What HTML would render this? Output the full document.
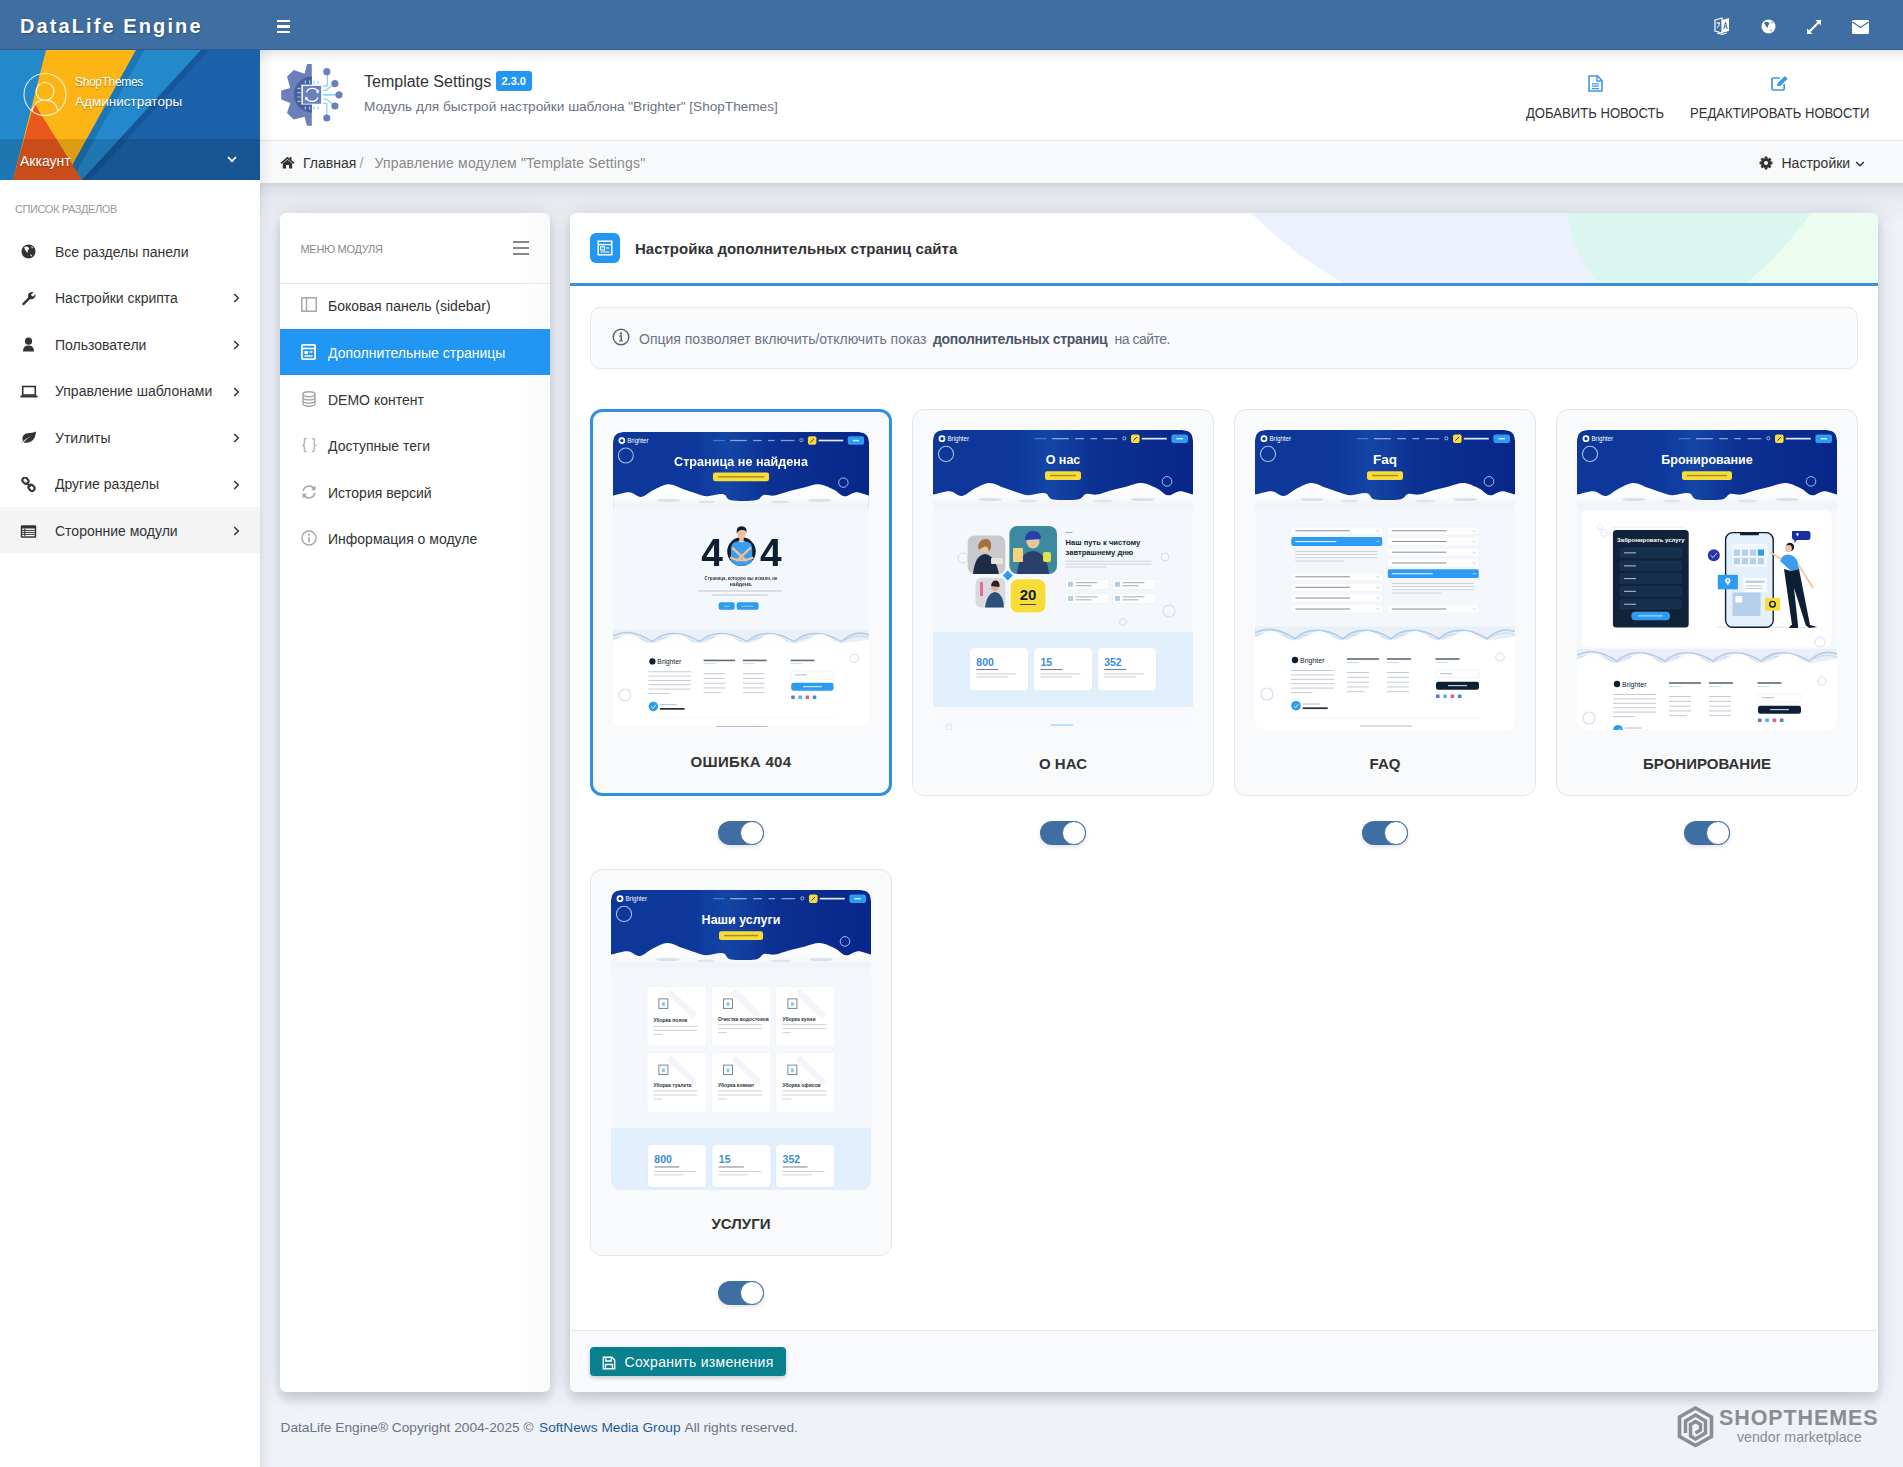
<!DOCTYPE html>
<html><head><meta charset="utf-8">
<style>
*{box-sizing:border-box;margin:0;padding:0}
html,body{width:1903px;height:1467px;overflow:hidden}
body{font-family:"Liberation Sans",sans-serif;background:#eff2f7;color:#333;position:relative}
.abs{position:absolute}
svg{display:block}
#topbar{left:0;top:0;width:1903px;height:50px;background:#3f6fa2}
#logo{left:20px;top:14px;color:#fff;font-size:20px;font-weight:bold;letter-spacing:2.1px;line-height:24px;text-shadow:1px 1px 2px rgba(0,0,0,.3)}
#sidebar{left:0;top:50px;width:260px;height:1417px;background:#fff}
#profile{left:0;top:50px;width:260px;height:130px;overflow:hidden}
#content-head{left:260px;top:50px;width:1643px;height:90px;background:#fff}
#crumbs{left:260px;top:140px;width:1643px;height:43px;background:#f8f9fb;border-top:1px solid #e4e7ec;}
.card{background:#fff;border-radius:6px;box-shadow:0 0 24px rgba(20,30,50,.12),0 7px 10px rgba(20,30,50,.14)}
#menu{left:280px;top:213px;width:270px;height:1179px}
#main{left:570px;top:213px;width:1308px;height:1179px;overflow:hidden}
.t{position:absolute;white-space:nowrap;line-height:1}
.sb-item{position:absolute;left:0;width:260px;height:46px}
.sb-item .lbl{position:absolute;left:55px;top:16px;font-size:14px;color:#333;white-space:nowrap;line-height:1}
.sb-item .ic{position:absolute;left:20px;top:15px}
.sb-item .chev{position:absolute;left:233px;top:19px}
.mm-item{position:absolute;left:0;width:270px;height:46px}
.mm-item .lbl{position:absolute;left:48px;top:16px;font-size:14px;color:#333;white-space:nowrap;line-height:1}
.mm-item .ic{position:absolute;left:21px;top:15px}
</style></head>
<body>
<div id="topbar" class="abs"></div>
<div id="logo" class="abs">DataLife Engine</div>
<!-- hamburger -->
<div class="abs" style="left:277px;top:20px;width:13px;height:13px">
  <div class="abs" style="left:0;top:0;width:13px;height:2.4px;background:#fff"></div>
  <div class="abs" style="left:0;top:5.3px;width:13px;height:2.4px;background:#fff"></div>
  <div class="abs" style="left:0;top:10.6px;width:13px;height:2.4px;background:#fff"></div>
</div>
<!-- top icons -->
<svg class="abs" style="left:1714px;top:17px" width="16" height="18" viewBox="0 0 16 18">
  <path d="M1 3 L8 1 L8 16 L1 14 Z" fill="none" stroke="#fff" stroke-width="1.2"/>
  <path d="M8 3 L15 1 L15 14 L8 16 Z" fill="#fff"/>
  <path d="M9.8 12 L11.5 5 L13.2 12 M10.4 9.8 H12.6" fill="none" stroke="#3f6fa2" stroke-width="1"/>
  <path d="M2.5 6 H6 M4.3 5 V6 M3 11 Q5.5 9 5.5 6" fill="none" stroke="#fff" stroke-width="1"/>
  <path d="M3 16 Q8 19 13 16" fill="none" stroke="#fff" stroke-width="1"/>
</svg>
<svg class="abs" style="left:1761px;top:19px" width="15" height="15" viewBox="0 0 15 15">
  <circle cx="7.5" cy="7.5" r="7" fill="#fff"/>
  <path d="M3 3.5 Q5 2 7.5 3.2 L8.5 5 L7 6.5 L6.8 9 L5.5 8 L4 5.5 Z M9 10 L11 11.5 L10 12.5 Z M10 2 L12 3.5 L11 4.5 Z" fill="#3f6fa2"/>
</svg>
<svg class="abs" style="left:1806px;top:19px" width="16" height="16" viewBox="0 0 16 16">
  <path d="M9.5 1 H15 V6.5 L13 4.5 L4.5 13 L6.5 15 H1 V9.5 L3 11.5 L11.5 3 Z" fill="#fff"/>
</svg>
<svg class="abs" style="left:1852px;top:20px" width="17" height="14" viewBox="0 0 17 14">
  <rect x="0" y="0" width="17" height="14" rx="1.5" fill="#fff"/>
  <path d="M0.5 2 L8.5 7.5 L16.5 2" fill="none" stroke="#3f6fa2" stroke-width="1.1"/>
</svg>

<div id="sidebar" class="abs" style="box-shadow:1px 0 3px rgba(0,0,0,.04)"></div>
<div id="profile" class="abs">
  <svg width="260" height="130" viewBox="0 50 260 130">
    <rect x="0" y="50" width="260" height="130" fill="#1b62ab"/>
    <polygon points="0,50 201,50 82,180 0,180" fill="#2389cb"/>
    <polygon points="201,50 209,50 90,180 82,180" fill="#134a86" opacity=".45"/>
    <polygon points="46,50 136,50 64,180 13,180" fill="#fcb514"/>
    <polygon points="136,50 144,50 72,180 64,180" fill="#14508f" opacity=".35"/>
    <polygon points="34,103 82,180 13,180" fill="#e9581d"/>
    <rect x="0" y="139" width="260" height="41" fill="#000" opacity=".13"/>
    <circle cx="45" cy="94.5" r="21" fill="none" stroke="#fff" stroke-opacity=".85" stroke-width="1.1"/>
    <circle cx="45" cy="91.5" r="9" fill="none" stroke="#fff" stroke-opacity=".85" stroke-width="1.1"/>
    <path d="M32 111 Q34 100 45 100 Q56 100 58 111" fill="none" stroke="#fff" stroke-opacity=".85" stroke-width="1.1"/>
  </svg>
</div>
<div class="t" style="left:75px;top:76px;font-size:12px;color:#fff;letter-spacing:-0.35px;text-shadow:0 1px 1px rgba(0,0,0,.3)">ShopThemes</div>
<div class="t" style="left:75px;top:95px;font-size:13.5px;color:#fff;text-shadow:0 1px 1px rgba(0,0,0,.3)">Администраторы</div>
<div class="t" style="left:20px;top:154px;font-size:14px;color:#fff;text-shadow:0 1px 1px rgba(0,0,0,.3)">Аккаунт</div>
<svg class="abs" style="left:227px;top:156px" width="10" height="7" viewBox="0 0 10 7"><path d="M1 1 L5 5.2 L9 1" fill="none" stroke="#fff" stroke-width="1.8"/></svg>

<div class="t" style="left:15px;top:204px;font-size:11px;color:#999;letter-spacing:-0.4px">СПИСОК РАЗДЕЛОВ</div>
<div class="t" style="left:55px;top:244.5px;font-size:14px;color:#333">Все разделы панели</div>
<div class="abs" style="left:21px;top:244.0px"><svg width="15" height="15" viewBox="0 0 15 15"><circle cx="7.5" cy="7.5" r="7" fill="#333"/><path d="M3.2 3.2 Q5 2 7.2 3 L8.3 4.8 L6.8 6.2 L6.7 8.8 L5.4 7.8 L3.8 5.3 Z M9.2 10 L11.2 11.6 L10 12.6 Z M10 2.2 L12 3.6 L11 4.6 Z" fill="#fff"/></svg></div>
<div class="t" style="left:55px;top:291.1px;font-size:14px;color:#333">Настройки скрипта</div>
<div class="abs" style="left:21px;top:290.6px"><svg width="15" height="15" viewBox="0 0 15 15"><path d="M1.5 12.3 L7.2 6.6 Q6.3 3.5 8.6 1.8 Q10.6 0.6 12.6 1.2 L10.2 3.4 L10.6 5 L12.2 5.4 L14.4 3 Q15 5.2 13.4 7 Q11.6 8.8 8.9 8.2 L3.2 13.9 Q2.3 14.6 1.5 13.8 Q0.8 13 1.5 12.3 Z" fill="#333"/></svg></div>
<div class="abs" style="left:233px;top:293.4px"><svg width="7" height="10" viewBox="0 0 7 10"><path d="M1.2 1 L5.3 5 L1.2 9" fill="none" stroke="#333" stroke-width="1.5"/></svg></div>
<div class="t" style="left:55px;top:337.6px;font-size:14px;color:#333">Пользователи</div>
<div class="abs" style="left:21px;top:337.2px"><svg width="15" height="15" viewBox="0 0 15 15"><circle cx="7.5" cy="4.2" r="3.6" fill="#333"/><path d="M2 14.5 Q2 8.6 7.5 8.6 Q13 8.6 13 14.5 Z" fill="#333"/></svg></div>
<div class="abs" style="left:233px;top:340.0px"><svg width="7" height="10" viewBox="0 0 7 10"><path d="M1.2 1 L5.3 5 L1.2 9" fill="none" stroke="#333" stroke-width="1.5"/></svg></div>
<div class="t" style="left:55px;top:384.2px;font-size:14px;color:#333">Управление шаблонами</div>
<div class="abs" style="left:20px;top:383.8px"><svg width="18" height="15" viewBox="0 0 18 15"><rect x="2.7" y="2.5" width="12.6" height="8.5" fill="none" stroke="#333" stroke-width="1.6"/><rect x="0.5" y="11.6" width="17" height="1.8" rx=".5" fill="#333"/></svg></div>
<div class="abs" style="left:233px;top:386.6px"><svg width="7" height="10" viewBox="0 0 7 10"><path d="M1.2 1 L5.3 5 L1.2 9" fill="none" stroke="#333" stroke-width="1.5"/></svg></div>
<div class="t" style="left:55px;top:430.9px;font-size:14px;color:#333">Утилиты</div>
<div class="abs" style="left:20px;top:430.4px"><svg width="17" height="15" viewBox="0 0 17 15"><path d="M1 13.5 Q6 8 12 5.5 Q6 9 3.5 12.5 Q7 13.5 11 11.5 Q15.5 9 16 1.5 Q12.5 3.2 8 3.3 Q3.5 3.5 2.5 7.5 Q2.2 9.5 3 11 Q1.8 12.3 1 13.5 Z" fill="#333"/></svg></div>
<div class="abs" style="left:233px;top:433.2px"><svg width="7" height="10" viewBox="0 0 7 10"><path d="M1.2 1 L5.3 5 L1.2 9" fill="none" stroke="#333" stroke-width="1.5"/></svg></div>
<div class="t" style="left:55px;top:477.4px;font-size:14px;color:#333">Другие разделы</div>
<div class="abs" style="left:21px;top:477.0px"><svg width="15" height="15" viewBox="0 0 15 15"><g fill="none" stroke="#333" stroke-width="2.1"><rect x="1.2" y="1.2" width="6.5" height="5" rx="2.5" transform="rotate(45 4.5 3.7)"/><rect x="7.3" y="8.3" width="6.5" height="5" rx="2.5" transform="rotate(45 10.5 10.8)"/></g><path d="M5.3 5.6 L9.5 9.8" stroke="#333" stroke-width="1.8"/></svg></div>
<div class="abs" style="left:233px;top:479.8px"><svg width="7" height="10" viewBox="0 0 7 10"><path d="M1.2 1 L5.3 5 L1.2 9" fill="none" stroke="#333" stroke-width="1.5"/></svg></div>
<div class="abs" style="left:0;top:506.9px;width:260px;height:46px;background:#f4f4f5"></div>
<div class="t" style="left:55px;top:524.1px;font-size:14px;color:#333">Сторонние модули</div>
<div class="abs" style="left:20px;top:523.6px"><svg width="17" height="15" viewBox="0 0 17 15"><rect x="0.8" y="1.3" width="15.4" height="12.4" rx="1.2" fill="#333"/><rect x="2.3" y="4.5" width="12.4" height="7.8" fill="#fff"/><path d="M2.3 6.4 H14.7 M2.3 8.4 H14.7 M2.3 10.4 H14.7" stroke="#333" stroke-width="1"/><path d="M4.8 4.5 V12.3" stroke="#333" stroke-width="1"/></svg></div>
<div class="abs" style="left:233px;top:526.4px"><svg width="7" height="10" viewBox="0 0 7 10"><path d="M1.2 1 L5.3 5 L1.2 9" fill="none" stroke="#333" stroke-width="1.5"/></svg></div>
<div id="content-head" class="abs"></div>
<svg class="abs" style="left:276px;top:60px" width="72" height="70" viewBox="0 0 72 70">
  <polygon points="31,4 35.8,4 35.8,65.8 31,65.8 28.6,56.8 17.7,59.6 11,53 14.3,43 5.2,39.6 5.2,30.5 14.3,28 11,16.7 17.7,10 28.6,13.8" fill="#6b80bb"/>
  <path d="M35.8 16.5 A18 18 0 0 0 35.8 52.5 Z" fill="#4b5f9c"/>
  <g stroke="#8fd3f4" stroke-width="1.2">
    <path d="M21.5 28.4 H24.5 M21.5 32.7 H24.5 M21.5 37 H24.5 M21.5 41.3 H24.5"/>
    <path d="M29.3 20.5 V23.5 M33.6 20.5 V23.5 M37.9 20.5 V23.5 M42.2 20.5 V23.5"/>
    <path d="M29.3 46.5 V49.5 M33.6 46.5 V49.5 M37.9 46.5 V49.5 M42.2 46.5 V49.5"/>
  </g>
  <g stroke="#8fd3f4" stroke-width="1.3" fill="none">
    <path d="M47 26 H51.3 V12"/>
    <path d="M47 30.3 H50 L58.7 23.6"/>
    <path d="M47 34.8 H63" stroke-width="1.8"/>
    <path d="M47 39.1 H50.6 L58.7 46"/>
    <path d="M47 43.4 H50.8 V58"/>
  </g>
  <g fill="#6b80bb">
    <circle cx="50.8" cy="11.7" r="3.6"/><circle cx="58.9" cy="23.6" r="3.6"/><circle cx="63" cy="34.8" r="3.6"/><circle cx="58.9" cy="46" r="3.6"/><circle cx="50.8" cy="58" r="3.6"/>
  </g>
  <rect x="25.3" y="24.6" width="20.5" height="20" fill="#e6eefa"/>
  <rect x="27" y="26" width="18" height="17.7" fill="#6b80bb"/>
  <path d="M30.5 32.5 A6 5 0 0 1 42 31.5" fill="none" stroke="#fff" stroke-width="1.2"/>
  <path d="M43.2 29.5 L42.5 33.5 L39.5 32 Z" fill="#fff"/>
  <path d="M41.8 37.5 A6 5 0 0 1 30.5 38.5" fill="none" stroke="#fff" stroke-width="1.2"/>
  <path d="M28.8 40.5 L29.5 36.5 L32.5 38 Z" fill="#fff"/>
</svg>
<div class="t" style="left:364px;top:73.5px;font-size:16px;color:#333">Template Settings</div>
<div class="abs" style="left:496px;top:71px;width:36px;height:20px;background:#2196f3;border-radius:3px"></div>
<div class="t" style="left:501.5px;top:76.2px;font-size:11px;font-weight:bold;color:#fff;letter-spacing:0px">2.3.0</div>
<div class="t" style="left:364px;top:100.2px;font-size:13.6px;color:#6b7385">Модуль для быстрой настройки шаблона "Brighter" [ShopThemes]</div>

<svg class="abs" style="left:1588px;top:75px" width="15" height="17" viewBox="0 0 15 17">
  <path d="M1 1 H9.5 L14 5.5 V16 H1 Z" fill="none" stroke="#3d98e8" stroke-width="1.6"/>
  <path d="M9 1 V6 H14" fill="none" stroke="#3d98e8" stroke-width="1.4"/>
  <path d="M4 8.8 H11 M4 11.2 H11 M4 13.6 H11" stroke="#3d98e8" stroke-width="1.3"/>
</svg>
<svg class="abs" style="left:1771px;top:75px" width="18" height="16" viewBox="0 0 18 16">
  <path d="M9 3 H2.2 Q1 3 1 4.2 V13.8 Q1 15 2.2 15 H12 Q13.2 15 13.2 13.8 V9" fill="none" stroke="#3d98e8" stroke-width="1.7"/>
  <path d="M6 11 L6.6 8.2 L13.8 1 L16.6 3.8 L9.4 11 Z" fill="#3d98e8"/>
</svg>
<div class="t" style="left:1526px;top:106.2px;font-size:14px;color:#333;transform:scaleX(.935);transform-origin:0 0">ДОБАВИТЬ НОВОСТЬ</div>
<div class="t" style="left:1690px;top:106.2px;font-size:14px;color:#333;transform:scaleX(.935);transform-origin:0 0">РЕДАКТИРОВАТЬ НОВОСТИ</div>

<div class="abs" style="left:260px;top:183px;width:1643px;height:40px;background:linear-gradient(to bottom,rgba(20,30,50,.14) 0,rgba(20,30,50,.07) 6px,rgba(20,30,50,.035) 16px,rgba(20,30,50,0) 40px)"></div>
<div id="crumbs" class="abs"></div>
<svg class="abs" style="left:280px;top:156px" width="15" height="13" viewBox="0 0 15 13">
  <path d="M7.5 0.8 L0.5 6.8 L1.6 8 L7.5 3 L13.4 8 L14.5 6.8 L11.5 4.2 V1 H9.8 V2.8 Z" fill="#333"/>
  <path d="M2.8 7.6 L7.5 3.8 L12.2 7.6 V12.5 H9 V9 H6 V12.5 H2.8 Z" fill="#333"/>
</svg>
<div class="t" style="left:303px;top:156.2px;font-size:14px;color:#333">Главная</div>
<div class="t" style="left:359.5px;top:156.2px;font-size:14px;color:#999">/</div>
<div class="t" style="left:374.5px;top:156.2px;font-size:14px;color:#888;letter-spacing:0.17px">Управление модулем "Template Settings"</div>
<svg class="abs" style="left:1759px;top:156px" width="14" height="14" viewBox="0 0 14 14">
  <g fill="#333"><circle cx="7" cy="7" r="4.8"/>
  <rect x="5.6" y="0.6" width="2.8" height="12.8" rx=".6"/><rect x="5.6" y="0.6" width="2.8" height="12.8" rx=".6" transform="rotate(45 7 7)"/><rect x="5.6" y="0.6" width="2.8" height="12.8" rx=".6" transform="rotate(90 7 7)"/><rect x="5.6" y="0.6" width="2.8" height="12.8" rx=".6" transform="rotate(135 7 7)"/></g>
  <circle cx="7" cy="7" r="2" fill="#f8f9fb"/>
</svg>
<div class="t" style="left:1781.5px;top:156.2px;font-size:14px;color:#333">Настройки</div>
<svg class="abs" style="left:1855px;top:160px" width="10" height="8" viewBox="0 0 10 8"><path d="M1.2 2 L5 5.8 L8.8 2" fill="none" stroke="#333" stroke-width="1.5"/></svg>

<div id="menu" class="abs card"></div>
<div class="abs" id="menu-grad" style="left:520px;top:213px;width:30px;height:1179px;border-radius:0 6px 6px 0;background:linear-gradient(to right,rgba(20,30,50,0),rgba(20,30,50,.022))"></div>
<div class="t" style="left:300.5px;top:243.7px;font-size:11px;color:#888;letter-spacing:-0.3px">МЕНЮ МОДУЛЯ</div>
<div class="abs" style="left:513px;top:241px;width:16px;height:14px">
  <div class="abs" style="left:0;top:0;width:16px;height:1.6px;background:#888"></div>
  <div class="abs" style="left:0;top:6.2px;width:16px;height:1.6px;background:#888"></div>
  <div class="abs" style="left:0;top:12.4px;width:16px;height:1.6px;background:#888"></div>
</div>
<div class="abs" style="left:280px;top:283px;width:270px;height:1px;background:#e5e7eb"></div>
<div class="abs" style="left:280px;top:329px;width:270px;height:46px;background:#2196f3"></div>
<svg class="abs" style="left:301px;top:297px" width="16" height="15" viewBox="0 0 16 15"><rect x="0.8" y="0.8" width="14.4" height="13.4" fill="none" stroke="#a6a6a6" stroke-width="1.5"/><path d="M5.5 0.8 V14.2" stroke="#a6a6a6" stroke-width="1.5"/></svg>
<div class="t" style="left:328px;top:299.2px;font-size:14px;color:#333">Боковая панель (sidebar)</div>
<svg class="abs" style="left:301px;top:344px" width="15" height="16" viewBox="0 0 15 16"><rect x="0.9" y="0.9" width="13.2" height="14.2" rx="1" fill="none" stroke="#fff" stroke-width="1.8"/><path d="M0.9 4.5 H14.1" stroke="#fff" stroke-width="1.6"/><rect x="3.5" y="7" width="3.6" height="3" fill="#fff"/><path d="M8.5 8 H11.5 M3.5 12 H11.5" stroke="#fff" stroke-width="1.3"/></svg>
<div class="t" style="left:328px;top:346.2px;font-size:14px;color:#fff">Дополнительные страницы</div>
<svg class="abs" style="left:302px;top:391px" width="14" height="16" viewBox="0 0 14 16"><g fill="none" stroke="#a6a6a6" stroke-width="1.4"><ellipse cx="7" cy="3.2" rx="6" ry="2.4"/><path d="M1 3.2 V12.8 Q1 15.2 7 15.2 Q13 15.2 13 12.8 V3.2"/><path d="M1 6.5 Q1 8.9 7 8.9 Q13 8.9 13 6.5 M1 9.7 Q1 12.1 7 12.1 Q13 12.1 13 9.7"/></g></svg>
<div class="t" style="left:328px;top:392.9px;font-size:14px;color:#333">DEMO контент</div>
<div class="t" style="left:302px;top:437px;font-size:14px;color:#a8a8a8;letter-spacing:5px">{}</div>
<div class="t" style="left:328px;top:439px;font-size:14px;color:#333">Доступные теги</div>
<svg class="abs" style="left:301px;top:484px" width="16" height="16" viewBox="0 0 16 16"><g fill="none" stroke="#a6a6a6" stroke-width="1.5"><path d="M2.2 7 A6 6 0 0 1 13.2 5"/><path d="M13.8 9 A6 6 0 0 1 2.8 11"/></g><path d="M14.5 1.5 V6.2 H9.8 Z M1.5 14.5 V9.8 H6.2 Z" fill="#a6a6a6"/></svg>
<div class="t" style="left:328px;top:485.6px;font-size:14px;color:#333">История версий</div>
<svg class="abs" style="left:301px;top:530px" width="16" height="16" viewBox="0 0 16 16"><circle cx="8" cy="8" r="7" fill="none" stroke="#a6a6a6" stroke-width="1.4"/><circle cx="8" cy="4.6" r="1.1" fill="#a6a6a6"/><path d="M8 7 V12" stroke="#a6a6a6" stroke-width="1.6"/></svg>
<div class="t" style="left:328px;top:532.2px;font-size:14px;color:#333">Информация о модуле</div>
<div id="main" class="abs card"></div>
<svg class="abs" style="left:570px;top:213px" width="1308" height="71" viewBox="570 213 1308 71">
  <defs><clipPath id="hc"><path d="M570 283 V219 Q570 213 576 213 H1872 Q1878 213 1878 219 V283 Z"/></clipPath></defs>
  <g clip-path="url(#hc)">
    <circle cx="1560" cy="-100" r="440" fill="#ebf2fd"/>
    <rect x="1690" y="213" width="190" height="71" fill="#ebfcf0"/>
    <path d="M1567 212 Q1574 258 1600 284 H1745 Q1784 252 1811 212 Z" fill="#dbf5ef"/>
  </g>
</svg>
<div class="abs" style="left:590px;top:233px;width:30px;height:30px;background:#2196f3;border-radius:6px"></div>
<svg class="abs" style="left:597px;top:240px" width="16" height="16" viewBox="0 0 16 16"><rect x="1.2" y="1.2" width="13.6" height="13.6" fill="none" stroke="#fff" stroke-width="1.5"/><path d="M1.2 4.6 H14.8" stroke="#fff" stroke-width="1.3"/><rect x="3.6" y="6.8" width="3.8" height="3.2" fill="none" stroke="#fff" stroke-width="1.1"/><path d="M8.8 8 H12.4 M3.6 12 H12.4" stroke="#fff" stroke-width="1.1"/></svg>
<div class="t" style="left:635px;top:241.3px;font-size:15px;font-weight:bold;color:#333">Настройка дополнительных страниц сайта</div>
<div class="abs" style="left:570px;top:283px;width:1308px;height:3px;background:#3a8fdc"></div>

<div class="abs" style="left:590px;top:306.5px;width:1268px;height:62.5px;background:#f9fafc;border:1px solid #e6e8ec;border-radius:10px"></div>
<svg class="abs" style="left:612px;top:328px" width="18" height="18" viewBox="0 0 18 18"><circle cx="9" cy="9" r="7.8" fill="none" stroke="#5d6678" stroke-width="1.5"/><circle cx="9" cy="5.4" r="1.2" fill="#5d6678"/><path d="M7.3 8 H9.2 V12.8 M7.3 12.8 H10.8" fill="none" stroke="#5d6678" stroke-width="1.5"/></svg>
<div class="t" style="left:639px;top:331.5px;font-size:14px;color:#6b7385">Опция позволяет включить/отключить показ</div>
<div class="t" style="left:933px;top:331.5px;font-size:14px;font-weight:bold;color:#4d5668;letter-spacing:-0.3px">дополнительных страниц</div>
<div class="t" style="left:1114.5px;top:331.5px;font-size:14px;color:#6b7385;letter-spacing:-0.5px">на сайте.</div>

<div class="abs" style="left:570px;top:1330px;width:1308px;height:62px;background:#f9fafc;border-top:1px solid #e6e8ec;border-radius:0 0 6px 6px"></div>
<div class="abs" style="left:590px;top:1347px;width:196px;height:29px;background:#08808d;border-radius:4px;box-shadow:0 2px 4px rgba(0,0,0,.2)"></div>
<svg class="abs" style="left:602px;top:1356px" width="14" height="14" viewBox="0 0 14 14"><path d="M1.3 1.3 H10 L12.7 4 V12.7 H1.3 Z" fill="none" stroke="#fff" stroke-width="1.4"/><path d="M3.8 1.3 V5 H9.2 V1.3" fill="none" stroke="#fff" stroke-width="1.3"/><path d="M3.5 12.7 V8.5 H10.5 V12.7" fill="none" stroke="#fff" stroke-width="1.3"/></svg>
<div class="t" style="left:624.5px;top:1355.2px;font-size:14px;color:#fff;letter-spacing:0.28px">Сохранить изменения</div>

<div class="t" style="left:280.5px;top:1421.4px;font-size:13.7px;color:#6b7385">DataLife Engine® Copyright 2004-2025 ©</div>
<div class="t" style="left:539px;top:1421.4px;font-size:13.7px;color:#1d5c98">SoftNews Media Group</div>
<div class="t" style="left:684.5px;top:1421.4px;font-size:13.7px;color:#6b7385">All rights reserved.</div>

<svg class="abs" style="left:1677px;top:1406px" width="37" height="42" viewBox="0 0 37 42">
  <path d="M18.5 2 L34.5 11 V30.5 L18.5 39.5 L2.5 30.5 V11 Z" fill="none" stroke="#8a8d91" stroke-width="3.6"/>
  <path d="M8.5 27 V15 L18.5 9 L28.5 15 V27 L18.5 33 L13.5 30 V18.5 L18.5 15.5 L23.5 18.5 V24 L18.5 27" fill="none" stroke="#8a8d91" stroke-width="3.4"/>
</svg>
<div class="t" style="left:1719px;top:1408px;font-size:21.5px;font-weight:bold;color:#8a8d91;letter-spacing:0.9px">SHOPTHEMES</div>
<div class="t" style="left:1737px;top:1430px;font-size:14.2px;color:#8a8d91">vendor marketplace</div>
<div class="abs" style="left:260px;top:50px;width:14px;height:1417px;background:linear-gradient(to right,rgba(20,30,50,.06),rgba(20,30,50,0))"></div>
<div class="abs" style="left:260px;top:50px;width:1643px;height:14px;background:linear-gradient(to bottom,rgba(20,30,50,.12),rgba(20,30,50,.05) 5px,rgba(20,30,50,0))"></div>
<div class="abs" style="left:0;top:48.5px;width:1903px;height:1.5px;background:rgba(20,40,70,.25)"></div>
<div class="abs" style="left:590px;top:409px;width:302px;height:387px;background:#f8fafc;border:3px solid #3390e0;border-radius:12px"></div>
<div class="abs" style="left:613px;top:432px;width:260px;height:300px;transform:scale(0.9846153846153847);transform-origin:0 0"><svg width="260" height="300" viewBox="0 0 260 300"><defs><clipPath id="tca"><path d="M0 11 Q0 0 11 0 H249 Q260 0 260 11 V289 Q260 300 249 300 H11 Q0 300 0 289 Z"/></clipPath></defs><g clip-path="url(#tca)"><rect width="260" height="300" fill="#f4f7fb"/><defs><linearGradient id="hga" x1="0" y1="0" x2="1" y2="0"><stop offset="0" stop-color="#0d3798"/><stop offset=".3" stop-color="#0d379b"/><stop offset=".45" stop-color="#1445a5"/><stop offset=".62" stop-color="#0b3192"/><stop offset="1" stop-color="#08268a"/></linearGradient><linearGradient id="sna" x1="0" y1="0" x2="0" y2="1"><stop offset="0" stop-color="#ffffff"/><stop offset=".45" stop-color="#fbfcfd"/><stop offset=".75" stop-color="#f0f3f7"/><stop offset="1" stop-color="#f4f7fb"/></linearGradient></defs><path d="M0 11 Q0 0 11 0 H249 Q260 0 260 11 V78 H0 Z" fill="url(#hga)"/><circle cx="9" cy="8.7" r="3.4" fill="#fff"/><circle cx="9" cy="8.7" r="1.6" fill="#0b2f8e"/><text x="14.5" y="11.3" font-family="Liberation Sans" font-size="7.4" fill="#fff" textLength="21.5" lengthAdjust="spacingAndGlyphs">Brighter</text><rect x="101.8" y="8" width="11.600000000000009" height="1.3" fill="#4aa8f5" opacity=".6"/><rect x="119" y="8" width="16.80000000000001" height="1.3" fill="#dfe6f5" opacity=".6"/><rect x="142.3" y="8" width="8.699999999999989" height="1.3" fill="#dfe6f5" opacity=".6"/><rect x="157.5" y="8" width="6.5" height="1.3" fill="#dfe6f5" opacity=".6"/><rect x="170.5" y="8" width="13.699999999999989" height="1.3" fill="#dfe6f5" opacity=".6"/><circle cx="191.3" cy="8.3" r="1.6" fill="none" stroke="#fff" stroke-width=".6"/><rect x="198" y="4.4" width="8.6" height="8.6" rx="2" fill="#f7dc3a"/><path d="M200.5 10.5 L204 7" stroke="#0f1f33" stroke-width=".9"/><rect x="208.8" y="7.8" width="25" height="1.7" fill="#fff" opacity=".9"/><rect x="238.4" y="4.4" width="16.6" height="8.6" rx="2.2" fill="#2d9cf0"/><rect x="243.5" y="8" width="6.5" height="1.4" fill="#fff" opacity=".8"/><circle cx="13" cy="23.9" r="7.6" fill="none" stroke="#b9cdf0" stroke-width="1.1" opacity=".9"/><circle cx="234" cy="51.4" r="4.8" fill="none" stroke="#b9cdf0" stroke-width="1" opacity=".9"/><text x="130" y="34.3" text-anchor="middle" font-family="Liberation Sans" font-weight="bold" font-size="12.8" fill="#fff">Страница не найдена</text><rect x="101.5" y="41.2" width="57" height="8.7" rx="2.2" fill="#f7dc3a"/><rect x="106.5" y="44.8" width="47" height="1.5" fill="#5a5320" opacity=".55"/><path d="M0 64.6 C3.6 64.0 11.6 61.0 16.4 61.2 C21.2 61.4 24.6 66.4 28.7 66 C32.8 65.6 36.5 61.2 41 59 C45.5 56.8 51.0 53.2 56 53 C61.0 52.8 66.2 56.2 71 57.8 C75.8 59.4 80.6 61.2 84.7 62.5 C88.8 63.8 91.0 65.2 95.6 65.3 C100.1 65.4 107.9 62.5 112 63.2 C116.1 63.9 114.5 68.4 120 69.4 C125.5 70.4 139.3 70.3 144.8 69.4 C150.3 68.5 149.8 64.8 153 64 C156.2 63.2 159.9 65.2 164 64.6 C168.1 64.0 172.6 61.9 177.6 60.5 C182.6 59.1 188.8 57.6 194 56.4 C199.2 55.1 204.0 52.7 209 53 C214.0 53.3 219.7 56.4 224 58.4 C228.3 60.4 231.2 64.8 235 65.3 C238.8 65.8 242.8 61.3 247 61.2 C251.2 61.1 257.0 64.0 260 64.6 V82 H0 Z" fill="url(#sna)"/><ellipse cx="57" cy="69.5" rx="12" ry="1.6" fill="#c3c8d0" opacity=".5"/><ellipse cx="95" cy="71" rx="9" ry="1.4" fill="#c3c8d0" opacity=".4"/><ellipse cx="170" cy="71" rx="10" ry="1.4" fill="#c3c8d0" opacity=".4"/><ellipse cx="210" cy="69.5" rx="12" ry="1.6" fill="#c3c8d0" opacity=".5"/><text x="89.6" y="136" font-family="Liberation Sans" font-weight="bold" font-size="39" fill="#0f1f33" textLength="22" lengthAdjust="spacingAndGlyphs">4</text><text x="149.2" y="136" font-family="Liberation Sans" font-weight="bold" font-size="39" fill="#0f1f33" textLength="22" lengthAdjust="spacingAndGlyphs">4</text><defs><clipPath id="pc404"><circle cx="130.5" cy="121.4" r="14.5"/><rect x="110" y="90" width="40" height="31"/></clipPath></defs><circle cx="130.5" cy="121.4" r="14.5" fill="#0f1f33"/><g clip-path="url(#pc404)"><path d="M119.8 140 V119 Q119.8 111.4 127 110.9 H134 Q141.4 111.4 141.4 119 V140 Z" fill="#3a9ded"/><path d="M121.5 118 L135 130.5 M139.5 118 L126 130.5" stroke="#f0c09a" stroke-width="2.4" stroke-linecap="round"/><path d="M118.8 127.5 Q130.5 133 142.6 127.5" stroke="#f0c09a" stroke-width="2.2" fill="none"/></g><rect x="128.3" y="107" width="4.4" height="4.5" fill="#f0c09a"/><path d="M127.6 110.8 Q130.5 113 133.4 110.8" fill="none" stroke="#e8eef5" stroke-width=".8"/><ellipse cx="130.5" cy="103.4" rx="4.4" ry="5.2" fill="#f0c09a"/><path d="M125.6 103 Q124.8 95.5 130.8 95.6 Q136.5 95.8 135.6 102.5 Q134.8 99 131 99.5 Q127.5 99.5 125.6 103 Z" fill="#0f1f33"/><text x="130" y="150" text-anchor="middle" font-family="Liberation Sans" font-weight="bold" font-size="5.2" fill="#2f3644" textLength="74" lengthAdjust="spacingAndGlyphs">Страница, которую вы искали, не</text><text x="130" y="156" text-anchor="middle" font-family="Liberation Sans" font-weight="bold" font-size="5.2" fill="#2f3644">найдена.</text><rect x="86.4" y="161" width="85.2" height=".9" fill="#b9c0ca"/><rect x="100.3" y="165.1" width="57" height=".9" fill="#b9c0ca"/><rect x="107.3" y="173" width="16.3" height="7.6" rx="2.2" fill="#2d9cf0"/><rect x="125.6" y="173" width="22.2" height="7.6" rx="2.2" fill="#2d9cf0"/><rect x="112.5" y="176.4" width="6" height=".9" fill="#fff" opacity=".6"/><rect x="130.5" y="176.4" width="12" height=".9" fill="#fff" opacity=".6"/><rect x="0" y="200.9" width="260" height="16" fill="#e9f0f8"/><path d="M0 206.9 C12 201.9 22 201.9 40 212.9 C52 201.9 70 201.9 88 212.9 C100 201.9 118 201.9 136 212.9 C148 201.9 166 201.9 184 212.9 C196 201.9 214 201.9 232 212.9 C242 203.9 252 202.9 260 205.9" fill="none" stroke="#aac6e4" stroke-width="1.6" opacity=".85"/><path d="M0 209.9 C14 204.9 26 206.9 38 214.9 C50 205.9 72 205.9 86 214.9 C98 205.9 120 205.9 134 214.9 C146 205.9 168 205.9 182 214.9 C194 205.9 216 205.9 230 214.9 C240 206.9 252 205.9 260 208.9" fill="none" stroke="#c3d7ec" stroke-width="1.2" opacity=".9"/><path d="M0 216.9 V210.9 Q2 212.9 6 208.9 Q16 201.9 26 208.9 Q30 212.9 40 214.9 Q50.5 212.9 54.5 208.9 Q64.5 201.9 74.5 208.9 Q78.5 212.9 88.5 214.9 Q98.7 212.9 102.7 208.9 Q112.7 201.9 122.7 208.9 Q126.7 212.9 136.7 214.9 Q147 212.9 151 208.9 Q161 201.9 171 208.9 Q175 212.9 185 214.9 Q196.6 212.9 200.6 208.9 Q210.6 201.9 220.6 208.9 Q224.6 212.9 234.6 214.9 L260 210.9 V216.9 Z" fill="#ffffff" opacity=".92"/><rect x="0" y="214" width="260" height="86" fill="#ffffff"/><circle cx="40" cy="233" r="3.2" fill="#0f1f33"/><text x="45" y="235.5" font-family="Liberation Sans" font-size="7" fill="#0f1f33">Brighter</text><rect x="36" y="243.0" width="43.0" height="1.0" fill="#c4cad3"/><rect x="36" y="247.4" width="43.0" height="1.0" fill="#c4cad3"/><rect x="36" y="251.8" width="43.0" height="1.0" fill="#c4cad3"/><rect x="36" y="256.2" width="43.0" height="1.0" fill="#c4cad3"/><rect x="36" y="260.6" width="43.0" height="1.0" fill="#c4cad3"/><rect x="36" y="265.0" width="21.5" height="1.0" fill="#c4cad3"/><rect x="92" y="231.2" width="32" height="1.6" fill="#3b4250" opacity=".8"/><rect x="92" y="235" width="12" height=".7" fill="#8cc4f0" opacity=".8"/><rect x="132" y="231.2" width="24" height="1.6" fill="#3b4250" opacity=".8"/><rect x="132" y="235" width="12" height=".7" fill="#8cc4f0" opacity=".8"/><rect x="180.5" y="231.2" width="24" height="1.6" fill="#3b4250" opacity=".8"/><rect x="180.5" y="235" width="12" height=".7" fill="#8cc4f0" opacity=".8"/><rect x="92" y="245.0" width="22.0" height="1.0" fill="#c4cad3"/><rect x="92" y="249.8" width="22.0" height="1.0" fill="#c4cad3"/><rect x="92" y="254.6" width="22.0" height="1.0" fill="#c4cad3"/><rect x="92" y="259.4" width="22.0" height="1.0" fill="#c4cad3"/><rect x="92" y="264.2" width="17.6" height="1.0" fill="#c4cad3"/><rect x="132" y="245.0" width="22.0" height="1.0" fill="#c4cad3"/><rect x="132" y="249.8" width="22.0" height="1.0" fill="#c4cad3"/><rect x="132" y="254.6" width="22.0" height="1.0" fill="#c4cad3"/><rect x="132" y="259.4" width="22.0" height="1.0" fill="#c4cad3"/><rect x="132" y="264.2" width="22.0" height="1.0" fill="#c4cad3"/><rect x="181" y="242.8" width="43" height="8" rx="2" fill="#fff" stroke="#e3e7ee" stroke-width=".6"/><rect x="185" y="246.2" width="12" height="1" fill="#b4bac4"/><rect x="181" y="254.7" width="43" height="8" rx="2.2" fill="#2d9cf0"/><rect x="193" y="258" width="19" height="1.2" fill="#fff" opacity=".75"/><rect x="181.0" y="267.5" width="3.6" height="3.6" rx=".6" fill="#3b5998" opacity=".8"/><rect x="188.3" y="267.5" width="3.6" height="3.6" rx=".6" fill="#1da1f2" opacity=".8"/><rect x="195.6" y="267.5" width="3.6" height="3.6" rx=".6" fill="#e1306c" opacity=".8"/><rect x="202.9" y="267.5" width="3.6" height="3.6" rx=".6" fill="#0e76a8" opacity=".8"/><circle cx="41" cy="278.7" r="4.8" fill="#2d9cf0"/><path d="M39 279.2 L40.6 280.6 L43.3 277.4" fill="none" stroke="#fff" stroke-width=".9"/><rect x="47.7" y="276.5" width="17" height="1" fill="#b4bac4"/><rect x="47.7" y="280.3" width="25" height="1.8" fill="#2c3340"/><circle cx="245" cy="230" r="4.2" fill="none" stroke="#d6dde7" stroke-width="1"/><circle cx="12" cy="267" r="6" fill="none" stroke="#dcdcf0" stroke-width="1.2"/><rect x="36" y="290" width="190" height=".5" fill="#eceff3"/><rect x="105" y="298.5" width="52" height="1" fill="#b4bac4"/></g></svg></div>
<div class="t" style="left:590px;width:302px;text-align:center;top:754.3px;font-size:15px;font-weight:bold;color:#333;letter-spacing:0.35px">ОШИБКА 404</div>
<div class="abs" style="left:718px;top:821px;width:46px;height:24px;border-radius:12px;background:#3f6fa2;box-shadow:0 2px 4px rgba(0,0,0,.12)"></div>
<div class="abs" style="left:740.2px;top:821.1px;width:23.8px;height:23.8px;border-radius:50%;background:#fff;border:1px solid #3f6fa2"></div>
<div class="abs" style="left:912px;top:409px;width:302px;height:387px;background:#f8fafc;border:1px solid #e3e6eb;border-radius:12px"></div>
<div class="abs" style="left:933px;top:430px;width:260px;height:300px;transform:scale(1.0);transform-origin:0 0"><svg width="260" height="300" viewBox="0 0 260 300"><defs><clipPath id="tcb"><path d="M0 11 Q0 0 11 0 H249 Q260 0 260 11 V289 Q260 300 249 300 H11 Q0 300 0 289 Z"/></clipPath></defs><g clip-path="url(#tcb)"><rect width="260" height="300" fill="#f4f7fb"/><defs><linearGradient id="hgb" x1="0" y1="0" x2="1" y2="0"><stop offset="0" stop-color="#0d3798"/><stop offset=".3" stop-color="#0d379b"/><stop offset=".45" stop-color="#1445a5"/><stop offset=".62" stop-color="#0b3192"/><stop offset="1" stop-color="#08268a"/></linearGradient><linearGradient id="snb" x1="0" y1="0" x2="0" y2="1"><stop offset="0" stop-color="#ffffff"/><stop offset=".45" stop-color="#fbfcfd"/><stop offset=".75" stop-color="#f0f3f7"/><stop offset="1" stop-color="#f4f7fb"/></linearGradient></defs><path d="M0 11 Q0 0 11 0 H249 Q260 0 260 11 V78 H0 Z" fill="url(#hgb)"/><circle cx="9" cy="8.7" r="3.4" fill="#fff"/><circle cx="9" cy="8.7" r="1.6" fill="#0b2f8e"/><text x="14.5" y="11.3" font-family="Liberation Sans" font-size="7.4" fill="#fff" textLength="21.5" lengthAdjust="spacingAndGlyphs">Brighter</text><rect x="101.8" y="8" width="11.600000000000009" height="1.3" fill="#4aa8f5" opacity=".6"/><rect x="119" y="8" width="16.80000000000001" height="1.3" fill="#dfe6f5" opacity=".6"/><rect x="142.3" y="8" width="8.699999999999989" height="1.3" fill="#dfe6f5" opacity=".6"/><rect x="157.5" y="8" width="6.5" height="1.3" fill="#dfe6f5" opacity=".6"/><rect x="170.5" y="8" width="13.699999999999989" height="1.3" fill="#dfe6f5" opacity=".6"/><circle cx="191.3" cy="8.3" r="1.6" fill="none" stroke="#fff" stroke-width=".6"/><rect x="198" y="4.4" width="8.6" height="8.6" rx="2" fill="#f7dc3a"/><path d="M200.5 10.5 L204 7" stroke="#0f1f33" stroke-width=".9"/><rect x="208.8" y="7.8" width="25" height="1.7" fill="#fff" opacity=".9"/><rect x="238.4" y="4.4" width="16.6" height="8.6" rx="2.2" fill="#2d9cf0"/><rect x="243.5" y="8" width="6.5" height="1.4" fill="#fff" opacity=".8"/><circle cx="13" cy="23.9" r="7.6" fill="none" stroke="#b9cdf0" stroke-width="1.1" opacity=".9"/><circle cx="234" cy="51.4" r="4.8" fill="none" stroke="#b9cdf0" stroke-width="1" opacity=".9"/><text x="130" y="34.3" text-anchor="middle" font-family="Liberation Sans" font-weight="bold" font-size="12.5" fill="#fff">О нас</text><rect x="112.0" y="41.2" width="36" height="8.7" rx="2.2" fill="#f7dc3a"/><rect x="117.0" y="44.8" width="26" height="1.5" fill="#5a5320" opacity=".55"/><path d="M0 64.6 C3.6 64.0 11.6 61.0 16.4 61.2 C21.2 61.4 24.6 66.4 28.7 66 C32.8 65.6 36.5 61.2 41 59 C45.5 56.8 51.0 53.2 56 53 C61.0 52.8 66.2 56.2 71 57.8 C75.8 59.4 80.6 61.2 84.7 62.5 C88.8 63.8 91.0 65.2 95.6 65.3 C100.1 65.4 107.9 62.5 112 63.2 C116.1 63.9 114.5 68.4 120 69.4 C125.5 70.4 139.3 70.3 144.8 69.4 C150.3 68.5 149.8 64.8 153 64 C156.2 63.2 159.9 65.2 164 64.6 C168.1 64.0 172.6 61.9 177.6 60.5 C182.6 59.1 188.8 57.6 194 56.4 C199.2 55.1 204.0 52.7 209 53 C214.0 53.3 219.7 56.4 224 58.4 C228.3 60.4 231.2 64.8 235 65.3 C238.8 65.8 242.8 61.3 247 61.2 C251.2 61.1 257.0 64.0 260 64.6 V82 H0 Z" fill="url(#snb)"/><ellipse cx="57" cy="69.5" rx="12" ry="1.6" fill="#c3c8d0" opacity=".5"/><ellipse cx="95" cy="71" rx="9" ry="1.4" fill="#c3c8d0" opacity=".4"/><ellipse cx="170" cy="71" rx="10" ry="1.4" fill="#c3c8d0" opacity=".4"/><ellipse cx="210" cy="69.5" rx="12" ry="1.6" fill="#c3c8d0" opacity=".5"/><circle cx="30" cy="128" r="5" fill="none" stroke="#d9dcef" stroke-width="1"/><circle cx="232" cy="127" r="4" fill="none" stroke="#d9dcef" stroke-width="1"/><circle cx="236" cy="181" r="6" fill="none" stroke="#d9dcef" stroke-width="1.1"/><circle cx="190" cy="192" r="3.5" fill="none" stroke="#d9dcef" stroke-width="1"/><rect x="34.7" y="105.4" width="37.6" height="38.6" rx="7" fill="#c7c9cc"/><path d="M40 144 Q42 125 52 124 Q62 125 66 144 Z" fill="#1d2c44"/><circle cx="52" cy="117" r="5.5" fill="#e8c8a8"/><path d="M45 116 Q47 108 54 109 Q59 110 58 118 L56 122 Q55 112 46 120 Z" fill="#a36f3a"/><rect x="58" y="128" width="12" height="6" rx="1" fill="#e9e4d8"/><rect x="76.4" y="96" width="47.6" height="48" rx="8" fill="#3d8aa0"/><path d="M84 144 Q86 122 100 121 Q114 122 116 144 Z" fill="#2a3f6a"/><circle cx="100" cy="112" r="6.5" fill="#e8c4a4"/><path d="M92 110 Q92 101 100 101 Q108 101 108 109 L93 110 Z" fill="#2741a8"/><rect x="80" y="118" width="10" height="14" rx="1" fill="#f2d27a"/><rect x="110" y="122" width="8" height="10" rx="2" fill="#dfe24a"/><rect x="42.5" y="147.7" width="29.8" height="29.8" rx="6" fill="#d8dade"/><path d="M52 177.5 Q54 163 62 162 Q70 163 71 177.5 Z" fill="#2e4f7a"/><circle cx="62" cy="157" r="4" fill="#d8b090"/><path d="M58 156 Q59 150 63 150.5 Q67 151 66.5 157 Z" fill="#2b1f1a"/><rect x="47" y="152" width="3" height="14" fill="#e46aa0"/><rect x="77" y="148.7" width="36" height="34.3" rx="8" fill="#f7dc3a" stroke="#fff" stroke-width="1"/><text x="95" y="170" text-anchor="middle" font-family="Liberation Sans" font-weight="bold" font-size="15" fill="#0f1f33">20</text><rect x="87" y="174" width="16" height="1" fill="#444"/><rect x="71.3" y="142" width="7" height="7" fill="#2d9cf0" transform="rotate(45 74.8 145.5)"/><rect x="132.5" y="102" width="7" height="1" fill="#7fb8ea"/><text x="132.5" y="114.5" font-family="Liberation Sans" font-weight="bold" font-size="7.6" fill="#0f1f33">Наш путь к чистому</text><text x="132.5" y="125" font-family="Liberation Sans" font-weight="bold" font-size="7.6" fill="#0f1f33">завтрашнему дню</text><rect x="132.5" y="130.8" width="86.0" height="0.8" fill="#c4cad3"/><rect x="132.5" y="133.70000000000002" width="86.0" height="0.8" fill="#c4cad3"/><rect x="132.5" y="136.60000000000002" width="41.3" height="0.8" fill="#c4cad3"/><rect x="132.5" y="149.3" width="43.5" height="10.4" rx="1.5" fill="#fff" stroke="#e2e7ee" stroke-width=".6"/><rect x="135.0" y="151.8" width="5" height="5" fill="#9fbfe0" opacity=".8"/><rect x="142.5" y="152.3" width="22" height=".9" fill="#9aa2ae"/><rect x="142.5" y="155.3" width="16" height=".9" fill="#9aa2ae"/><rect x="179.5" y="149.3" width="43.5" height="10.4" rx="1.5" fill="#fff" stroke="#e2e7ee" stroke-width=".6"/><rect x="182.0" y="151.8" width="5" height="5" fill="#9fbfe0" opacity=".8"/><rect x="189.5" y="152.3" width="22" height=".9" fill="#9aa2ae"/><rect x="189.5" y="155.3" width="16" height=".9" fill="#9aa2ae"/><rect x="132.5" y="163.4" width="43.5" height="10.4" rx="1.5" fill="#fff" stroke="#e2e7ee" stroke-width=".6"/><rect x="135.0" y="165.9" width="5" height="5" fill="#9fbfe0" opacity=".8"/><rect x="142.5" y="166.4" width="22" height=".9" fill="#9aa2ae"/><rect x="142.5" y="169.4" width="16" height=".9" fill="#9aa2ae"/><rect x="179.5" y="163.4" width="43.5" height="10.4" rx="1.5" fill="#fff" stroke="#e2e7ee" stroke-width=".6"/><rect x="182.0" y="165.9" width="5" height="5" fill="#9fbfe0" opacity=".8"/><rect x="189.5" y="166.4" width="22" height=".9" fill="#9aa2ae"/><rect x="189.5" y="169.4" width="16" height=".9" fill="#9aa2ae"/><rect x="0" y="202" width="260" height="75" fill="#e2effc"/><rect x="36.3" y="217.6" width="59.2" height="43.4" rx="4" fill="#fff" stroke="#d4e3f3" stroke-width=".6"/><text x="43.3" y="235.5" font-family="Liberation Sans" font-weight="bold" font-size="10.5" fill="#3b8fd0">800</text><rect x="43.3" y="239" width="22" height=".9" fill="#6a7280"/><rect x="43.3" y="243.5" width="40.0" height="0.8" fill="#b8bfca"/><rect x="43.3" y="246.5" width="32.0" height="0.8" fill="#b8bfca"/><rect x="100.5" y="217.6" width="59.2" height="43.4" rx="4" fill="#fff" stroke="#d4e3f3" stroke-width=".6"/><text x="107.5" y="235.5" font-family="Liberation Sans" font-weight="bold" font-size="10.5" fill="#3b8fd0">15</text><rect x="107.5" y="239" width="22" height=".9" fill="#6a7280"/><rect x="107.5" y="243.5" width="40.0" height="0.8" fill="#b8bfca"/><rect x="107.5" y="246.5" width="32.0" height="0.8" fill="#b8bfca"/><rect x="164.2" y="217.6" width="59.2" height="43.4" rx="4" fill="#fff" stroke="#d4e3f3" stroke-width=".6"/><text x="171.2" y="235.5" font-family="Liberation Sans" font-weight="bold" font-size="10.5" fill="#3b8fd0">352</text><rect x="171.2" y="239" width="22" height=".9" fill="#6a7280"/><rect x="171.2" y="243.5" width="40.0" height="0.8" fill="#b8bfca"/><rect x="171.2" y="246.5" width="32.0" height="0.8" fill="#b8bfca"/><rect x="0" y="277" width="260" height="23" fill="#f7f9fc"/><rect x="118" y="294.5" width="22" height="1" fill="#8cc4f0"/><circle cx="16" cy="297" r="3" fill="none" stroke="#dde" stroke-width=".8"/></g></svg></div>
<div class="t" style="left:912px;width:302px;text-align:center;top:756.3px;font-size:15px;font-weight:bold;color:#333;letter-spacing:0px">О НАС</div>
<div class="abs" style="left:1040px;top:821px;width:46px;height:24px;border-radius:12px;background:#3f6fa2;box-shadow:0 2px 4px rgba(0,0,0,.12)"></div>
<div class="abs" style="left:1062.2px;top:821.1px;width:23.8px;height:23.8px;border-radius:50%;background:#fff;border:1px solid #3f6fa2"></div>
<div class="abs" style="left:1234px;top:409px;width:302px;height:387px;background:#f8fafc;border:1px solid #e3e6eb;border-radius:12px"></div>
<div class="abs" style="left:1255px;top:430px;width:260px;height:300px;transform:scale(1.0);transform-origin:0 0"><svg width="260" height="300" viewBox="0 0 260 300"><defs><clipPath id="tcc"><path d="M0 11 Q0 0 11 0 H249 Q260 0 260 11 V289 Q260 300 249 300 H11 Q0 300 0 289 Z"/></clipPath></defs><g clip-path="url(#tcc)"><rect width="260" height="300" fill="#f4f7fb"/><defs><linearGradient id="hgc" x1="0" y1="0" x2="1" y2="0"><stop offset="0" stop-color="#0d3798"/><stop offset=".3" stop-color="#0d379b"/><stop offset=".45" stop-color="#1445a5"/><stop offset=".62" stop-color="#0b3192"/><stop offset="1" stop-color="#08268a"/></linearGradient><linearGradient id="snc" x1="0" y1="0" x2="0" y2="1"><stop offset="0" stop-color="#ffffff"/><stop offset=".45" stop-color="#fbfcfd"/><stop offset=".75" stop-color="#f0f3f7"/><stop offset="1" stop-color="#f4f7fb"/></linearGradient></defs><path d="M0 11 Q0 0 11 0 H249 Q260 0 260 11 V78 H0 Z" fill="url(#hgc)"/><circle cx="9" cy="8.7" r="3.4" fill="#fff"/><circle cx="9" cy="8.7" r="1.6" fill="#0b2f8e"/><text x="14.5" y="11.3" font-family="Liberation Sans" font-size="7.4" fill="#fff" textLength="21.5" lengthAdjust="spacingAndGlyphs">Brighter</text><rect x="101.8" y="8" width="11.600000000000009" height="1.3" fill="#4aa8f5" opacity=".6"/><rect x="119" y="8" width="16.80000000000001" height="1.3" fill="#dfe6f5" opacity=".6"/><rect x="142.3" y="8" width="8.699999999999989" height="1.3" fill="#dfe6f5" opacity=".6"/><rect x="157.5" y="8" width="6.5" height="1.3" fill="#dfe6f5" opacity=".6"/><rect x="170.5" y="8" width="13.699999999999989" height="1.3" fill="#dfe6f5" opacity=".6"/><circle cx="191.3" cy="8.3" r="1.6" fill="none" stroke="#fff" stroke-width=".6"/><rect x="198" y="4.4" width="8.6" height="8.6" rx="2" fill="#f7dc3a"/><path d="M200.5 10.5 L204 7" stroke="#0f1f33" stroke-width=".9"/><rect x="208.8" y="7.8" width="25" height="1.7" fill="#fff" opacity=".9"/><rect x="238.4" y="4.4" width="16.6" height="8.6" rx="2.2" fill="#2d9cf0"/><rect x="243.5" y="8" width="6.5" height="1.4" fill="#fff" opacity=".8"/><circle cx="13" cy="23.9" r="7.6" fill="none" stroke="#b9cdf0" stroke-width="1.1" opacity=".9"/><circle cx="234" cy="51.4" r="4.8" fill="none" stroke="#b9cdf0" stroke-width="1" opacity=".9"/><text x="130" y="34.3" text-anchor="middle" font-family="Liberation Sans" font-weight="bold" font-size="13.5" fill="#fff">Faq</text><rect x="112.0" y="41.2" width="36" height="8.7" rx="2.2" fill="#f7dc3a"/><rect x="117.0" y="44.8" width="26" height="1.5" fill="#5a5320" opacity=".55"/><path d="M0 64.6 C3.6 64.0 11.6 61.0 16.4 61.2 C21.2 61.4 24.6 66.4 28.7 66 C32.8 65.6 36.5 61.2 41 59 C45.5 56.8 51.0 53.2 56 53 C61.0 52.8 66.2 56.2 71 57.8 C75.8 59.4 80.6 61.2 84.7 62.5 C88.8 63.8 91.0 65.2 95.6 65.3 C100.1 65.4 107.9 62.5 112 63.2 C116.1 63.9 114.5 68.4 120 69.4 C125.5 70.4 139.3 70.3 144.8 69.4 C150.3 68.5 149.8 64.8 153 64 C156.2 63.2 159.9 65.2 164 64.6 C168.1 64.0 172.6 61.9 177.6 60.5 C182.6 59.1 188.8 57.6 194 56.4 C199.2 55.1 204.0 52.7 209 53 C214.0 53.3 219.7 56.4 224 58.4 C228.3 60.4 231.2 64.8 235 65.3 C238.8 65.8 242.8 61.3 247 61.2 C251.2 61.1 257.0 64.0 260 64.6 V82 H0 Z" fill="url(#snc)"/><ellipse cx="57" cy="69.5" rx="12" ry="1.6" fill="#c3c8d0" opacity=".5"/><ellipse cx="95" cy="71" rx="9" ry="1.4" fill="#c3c8d0" opacity=".4"/><ellipse cx="170" cy="71" rx="10" ry="1.4" fill="#c3c8d0" opacity=".4"/><ellipse cx="210" cy="69.5" rx="12" ry="1.6" fill="#c3c8d0" opacity=".5"/><rect x="36.3" y="96.8" width="91" height="8" rx="1.5" fill="#fff" stroke="#eceff4" stroke-width=".5"/><rect x="40.3" y="100.3" width="54.6" height="1" fill="#3a4150" opacity=".6"/><path d="M121.3 100.2 L122.8 101.6 L124.3 100.2" fill="none" stroke="#999" stroke-width=".5"/><rect x="36.3" y="107.1" width="91" height="8.8" rx="1.8" fill="#2d9cf0"/><rect x="40.3" y="111.0" width="41.0" height="1.1" fill="#fff" opacity=".85"/><path d="M121.3 112.3 L122.8 110.8 L124.3 112.3" fill="none" stroke="#fff" stroke-width=".6"/><rect x="36.3" y="142.8" width="91" height="8" rx="1.5" fill="#fff" stroke="#eceff4" stroke-width=".5"/><rect x="40.3" y="146.3" width="54.6" height="1" fill="#3a4150" opacity=".6"/><path d="M121.3 146.20000000000002 L122.8 147.60000000000002 L124.3 146.20000000000002" fill="none" stroke="#999" stroke-width=".5"/><rect x="36.3" y="153.3" width="91" height="8" rx="1.5" fill="#fff" stroke="#eceff4" stroke-width=".5"/><rect x="40.3" y="156.8" width="54.6" height="1" fill="#3a4150" opacity=".6"/><path d="M121.3 156.70000000000002 L122.8 158.10000000000002 L124.3 156.70000000000002" fill="none" stroke="#999" stroke-width=".5"/><rect x="36.3" y="164" width="91" height="8" rx="1.5" fill="#fff" stroke="#eceff4" stroke-width=".5"/><rect x="40.3" y="167.5" width="54.6" height="1" fill="#3a4150" opacity=".6"/><path d="M121.3 167.4 L122.8 168.8 L124.3 167.4" fill="none" stroke="#999" stroke-width=".5"/><rect x="36.3" y="175" width="91" height="8" rx="1.5" fill="#fff" stroke="#eceff4" stroke-width=".5"/><rect x="40.3" y="178.5" width="54.6" height="1" fill="#3a4150" opacity=".6"/><path d="M121.3 178.4 L122.8 179.8 L124.3 178.4" fill="none" stroke="#999" stroke-width=".5"/><rect x="40.3" y="121.0" width="82.0" height="0.8" fill="#c4cad3"/><rect x="40.3" y="124.2" width="82.0" height="0.8" fill="#c4cad3"/><rect x="40.3" y="127.4" width="82.0" height="0.8" fill="#c4cad3"/><rect x="40.3" y="130.6" width="49.2" height="0.8" fill="#c4cad3"/><rect x="132.8" y="96.8" width="91" height="8" rx="1.5" fill="#fff" stroke="#eceff4" stroke-width=".5"/><rect x="136.8" y="100.3" width="54.6" height="1" fill="#3a4150" opacity=".6"/><path d="M217.8 100.2 L219.3 101.6 L220.8 100.2" fill="none" stroke="#999" stroke-width=".5"/><rect x="132.8" y="107.5" width="91" height="8" rx="1.5" fill="#fff" stroke="#eceff4" stroke-width=".5"/><rect x="136.8" y="111.0" width="54.6" height="1" fill="#3a4150" opacity=".6"/><path d="M217.8 110.9 L219.3 112.3 L220.8 110.9" fill="none" stroke="#999" stroke-width=".5"/><rect x="132.8" y="118.2" width="91" height="8" rx="1.5" fill="#fff" stroke="#eceff4" stroke-width=".5"/><rect x="136.8" y="121.7" width="54.6" height="1" fill="#3a4150" opacity=".6"/><path d="M217.8 121.60000000000001 L219.3 123.0 L220.8 121.60000000000001" fill="none" stroke="#999" stroke-width=".5"/><rect x="132.8" y="129" width="91" height="8" rx="1.5" fill="#fff" stroke="#eceff4" stroke-width=".5"/><rect x="136.8" y="132.5" width="54.6" height="1" fill="#3a4150" opacity=".6"/><path d="M217.8 132.4 L219.3 133.8 L220.8 132.4" fill="none" stroke="#999" stroke-width=".5"/><rect x="132.8" y="139.29999999999998" width="91" height="8.8" rx="1.8" fill="#2d9cf0"/><rect x="136.8" y="143.2" width="41.0" height="1.1" fill="#fff" opacity=".85"/><path d="M217.8 144.5 L219.3 143.0 L220.8 144.5" fill="none" stroke="#fff" stroke-width=".6"/><rect x="132.8" y="175" width="91" height="8" rx="1.5" fill="#fff" stroke="#eceff4" stroke-width=".5"/><rect x="136.8" y="178.5" width="54.6" height="1" fill="#3a4150" opacity=".6"/><path d="M217.8 178.4 L219.3 179.8 L220.8 178.4" fill="none" stroke="#999" stroke-width=".5"/><rect x="136.8" y="153.0" width="82.0" height="0.8" fill="#c4cad3"/><rect x="136.8" y="156.2" width="82.0" height="0.8" fill="#c4cad3"/><rect x="136.8" y="159.4" width="82.0" height="0.8" fill="#c4cad3"/><rect x="136.8" y="162.6" width="49.2" height="0.8" fill="#c4cad3"/><rect x="0" y="196.6" width="260" height="16" fill="#e9f0f8"/><path d="M0 202.6 C12 197.6 22 197.6 40 208.6 C52 197.6 70 197.6 88 208.6 C100 197.6 118 197.6 136 208.6 C148 197.6 166 197.6 184 208.6 C196 197.6 214 197.6 232 208.6 C242 199.6 252 198.6 260 201.6" fill="none" stroke="#aac6e4" stroke-width="1.6" opacity=".85"/><path d="M0 205.6 C14 200.6 26 202.6 38 210.6 C50 201.6 72 201.6 86 210.6 C98 201.6 120 201.6 134 210.6 C146 201.6 168 201.6 182 210.6 C194 201.6 216 201.6 230 210.6 C240 202.6 252 201.6 260 204.6" fill="none" stroke="#c3d7ec" stroke-width="1.2" opacity=".9"/><path d="M0 212.6 V206.6 Q2 208.6 6 204.6 Q16 197.6 26 204.6 Q30 208.6 40 210.6 Q50.5 208.6 54.5 204.6 Q64.5 197.6 74.5 204.6 Q78.5 208.6 88.5 210.6 Q98.7 208.6 102.7 204.6 Q112.7 197.6 122.7 204.6 Q126.7 208.6 136.7 210.6 Q147 208.6 151 204.6 Q161 197.6 171 204.6 Q175 208.6 185 210.6 Q196.6 208.6 200.6 204.6 Q210.6 197.6 220.6 204.6 Q224.6 208.6 234.6 210.6 L260 206.6 V212.6 Z" fill="#ffffff" opacity=".92"/><rect x="0" y="211" width="260" height="89" fill="#ffffff"/><circle cx="40" cy="230" r="3.2" fill="#0f1f33"/><text x="45" y="232.5" font-family="Liberation Sans" font-size="7" fill="#0f1f33">Brighter</text><rect x="36" y="240.0" width="43.0" height="1.0" fill="#c4cad3"/><rect x="36" y="244.4" width="43.0" height="1.0" fill="#c4cad3"/><rect x="36" y="248.8" width="43.0" height="1.0" fill="#c4cad3"/><rect x="36" y="253.2" width="43.0" height="1.0" fill="#c4cad3"/><rect x="36" y="257.6" width="43.0" height="1.0" fill="#c4cad3"/><rect x="36" y="262.0" width="21.5" height="1.0" fill="#c4cad3"/><rect x="92" y="228.2" width="32" height="1.6" fill="#3b4250" opacity=".8"/><rect x="92" y="232" width="12" height=".7" fill="#8cc4f0" opacity=".8"/><rect x="132" y="228.2" width="24" height="1.6" fill="#3b4250" opacity=".8"/><rect x="132" y="232" width="12" height=".7" fill="#8cc4f0" opacity=".8"/><rect x="180.5" y="228.2" width="24" height="1.6" fill="#3b4250" opacity=".8"/><rect x="180.5" y="232" width="12" height=".7" fill="#8cc4f0" opacity=".8"/><rect x="92" y="242.0" width="22.0" height="1.0" fill="#c4cad3"/><rect x="92" y="246.8" width="22.0" height="1.0" fill="#c4cad3"/><rect x="92" y="251.6" width="22.0" height="1.0" fill="#c4cad3"/><rect x="92" y="256.4" width="22.0" height="1.0" fill="#c4cad3"/><rect x="92" y="261.2" width="17.6" height="1.0" fill="#c4cad3"/><rect x="132" y="242.0" width="22.0" height="1.0" fill="#c4cad3"/><rect x="132" y="246.8" width="22.0" height="1.0" fill="#c4cad3"/><rect x="132" y="251.6" width="22.0" height="1.0" fill="#c4cad3"/><rect x="132" y="256.4" width="22.0" height="1.0" fill="#c4cad3"/><rect x="132" y="261.2" width="22.0" height="1.0" fill="#c4cad3"/><rect x="181" y="239.8" width="43" height="8" rx="2" fill="#fff" stroke="#e3e7ee" stroke-width=".6"/><rect x="185" y="243.2" width="12" height="1" fill="#b4bac4"/><rect x="181" y="251.7" width="43" height="8" rx="2.2" fill="#0f1f33"/><rect x="193" y="255" width="19" height="1.2" fill="#fff" opacity=".75"/><rect x="181.0" y="264.5" width="3.6" height="3.6" rx=".6" fill="#3b5998" opacity=".8"/><rect x="188.3" y="264.5" width="3.6" height="3.6" rx=".6" fill="#1da1f2" opacity=".8"/><rect x="195.6" y="264.5" width="3.6" height="3.6" rx=".6" fill="#e1306c" opacity=".8"/><rect x="202.9" y="264.5" width="3.6" height="3.6" rx=".6" fill="#0e76a8" opacity=".8"/><circle cx="41" cy="275.7" r="4.8" fill="#2d9cf0"/><path d="M39 276.2 L40.6 277.6 L43.3 274.4" fill="none" stroke="#fff" stroke-width=".9"/><rect x="47.7" y="273.5" width="17" height="1" fill="#b4bac4"/><rect x="47.7" y="277.3" width="25" height="1.8" fill="#2c3340"/><circle cx="245" cy="227" r="4.2" fill="none" stroke="#d6dde7" stroke-width="1"/><circle cx="12" cy="264" r="6" fill="none" stroke="#dcdcf0" stroke-width="1.2"/><rect x="36" y="287" width="190" height=".5" fill="#eceff3"/><rect x="105" y="295.5" width="52" height="1" fill="#b4bac4"/></g></svg></div>
<div class="t" style="left:1234px;width:302px;text-align:center;top:756.3px;font-size:15px;font-weight:bold;color:#333;letter-spacing:0px">FAQ</div>
<div class="abs" style="left:1362px;top:821px;width:46px;height:24px;border-radius:12px;background:#3f6fa2;box-shadow:0 2px 4px rgba(0,0,0,.12)"></div>
<div class="abs" style="left:1384.2px;top:821.1px;width:23.8px;height:23.8px;border-radius:50%;background:#fff;border:1px solid #3f6fa2"></div>
<div class="abs" style="left:1556px;top:409px;width:302px;height:387px;background:#f8fafc;border:1px solid #e3e6eb;border-radius:12px"></div>
<div class="abs" style="left:1577px;top:430px;width:260px;height:300px;transform:scale(1.0);transform-origin:0 0"><svg width="260" height="300" viewBox="0 0 260 300"><defs><clipPath id="tcd"><path d="M0 11 Q0 0 11 0 H249 Q260 0 260 11 V289 Q260 300 249 300 H11 Q0 300 0 289 Z"/></clipPath></defs><g clip-path="url(#tcd)"><rect width="260" height="300" fill="#f4f7fb"/><defs><linearGradient id="hgd" x1="0" y1="0" x2="1" y2="0"><stop offset="0" stop-color="#0d3798"/><stop offset=".3" stop-color="#0d379b"/><stop offset=".45" stop-color="#1445a5"/><stop offset=".62" stop-color="#0b3192"/><stop offset="1" stop-color="#08268a"/></linearGradient><linearGradient id="snd" x1="0" y1="0" x2="0" y2="1"><stop offset="0" stop-color="#ffffff"/><stop offset=".45" stop-color="#fbfcfd"/><stop offset=".75" stop-color="#f0f3f7"/><stop offset="1" stop-color="#f4f7fb"/></linearGradient></defs><path d="M0 11 Q0 0 11 0 H249 Q260 0 260 11 V78 H0 Z" fill="url(#hgd)"/><circle cx="9" cy="8.7" r="3.4" fill="#fff"/><circle cx="9" cy="8.7" r="1.6" fill="#0b2f8e"/><text x="14.5" y="11.3" font-family="Liberation Sans" font-size="7.4" fill="#fff" textLength="21.5" lengthAdjust="spacingAndGlyphs">Brighter</text><rect x="101.8" y="8" width="11.600000000000009" height="1.3" fill="#4aa8f5" opacity=".6"/><rect x="119" y="8" width="16.80000000000001" height="1.3" fill="#dfe6f5" opacity=".6"/><rect x="142.3" y="8" width="8.699999999999989" height="1.3" fill="#dfe6f5" opacity=".6"/><rect x="157.5" y="8" width="6.5" height="1.3" fill="#dfe6f5" opacity=".6"/><rect x="170.5" y="8" width="13.699999999999989" height="1.3" fill="#dfe6f5" opacity=".6"/><circle cx="191.3" cy="8.3" r="1.6" fill="none" stroke="#fff" stroke-width=".6"/><rect x="198" y="4.4" width="8.6" height="8.6" rx="2" fill="#f7dc3a"/><path d="M200.5 10.5 L204 7" stroke="#0f1f33" stroke-width=".9"/><rect x="208.8" y="7.8" width="25" height="1.7" fill="#fff" opacity=".9"/><rect x="238.4" y="4.4" width="16.6" height="8.6" rx="2.2" fill="#2d9cf0"/><rect x="243.5" y="8" width="6.5" height="1.4" fill="#fff" opacity=".8"/><circle cx="13" cy="23.9" r="7.6" fill="none" stroke="#b9cdf0" stroke-width="1.1" opacity=".9"/><circle cx="234" cy="51.4" r="4.8" fill="none" stroke="#b9cdf0" stroke-width="1" opacity=".9"/><text x="130" y="34.3" text-anchor="middle" font-family="Liberation Sans" font-weight="bold" font-size="12.5" fill="#fff">Бронирование</text><rect x="105.0" y="41.2" width="50" height="8.7" rx="2.2" fill="#f7dc3a"/><rect x="110.0" y="44.8" width="40" height="1.5" fill="#5a5320" opacity=".55"/><path d="M0 64.6 C3.6 64.0 11.6 61.0 16.4 61.2 C21.2 61.4 24.6 66.4 28.7 66 C32.8 65.6 36.5 61.2 41 59 C45.5 56.8 51.0 53.2 56 53 C61.0 52.8 66.2 56.2 71 57.8 C75.8 59.4 80.6 61.2 84.7 62.5 C88.8 63.8 91.0 65.2 95.6 65.3 C100.1 65.4 107.9 62.5 112 63.2 C116.1 63.9 114.5 68.4 120 69.4 C125.5 70.4 139.3 70.3 144.8 69.4 C150.3 68.5 149.8 64.8 153 64 C156.2 63.2 159.9 65.2 164 64.6 C168.1 64.0 172.6 61.9 177.6 60.5 C182.6 59.1 188.8 57.6 194 56.4 C199.2 55.1 204.0 52.7 209 53 C214.0 53.3 219.7 56.4 224 58.4 C228.3 60.4 231.2 64.8 235 65.3 C238.8 65.8 242.8 61.3 247 61.2 C251.2 61.1 257.0 64.0 260 64.6 V82 H0 Z" fill="url(#snd)"/><ellipse cx="57" cy="69.5" rx="12" ry="1.6" fill="#c3c8d0" opacity=".5"/><ellipse cx="95" cy="71" rx="9" ry="1.4" fill="#c3c8d0" opacity=".4"/><ellipse cx="170" cy="71" rx="10" ry="1.4" fill="#c3c8d0" opacity=".4"/><ellipse cx="210" cy="69.5" rx="12" ry="1.6" fill="#c3c8d0" opacity=".5"/><rect x="4.6" y="80.4" width="250" height="137" rx="6" fill="#fff"/><circle cx="23" cy="97" r="2.5" fill="none" stroke="#dde" stroke-width=".7"/><circle cx="27" cy="103" r="3.4" fill="none" stroke="#dde" stroke-width=".8"/><circle cx="243" cy="212" r="5" fill="none" stroke="#dde" stroke-width="1"/><rect x="33" y="97" width="76" height="99" rx="4" fill="none" stroke="#dfe6f2" stroke-width=".7"/><rect x="35.9" y="100" width="75.8" height="97.4" rx="3.5" fill="#10233a"/><text x="73.8" y="112" text-anchor="middle" font-family="Liberation Sans" font-weight="bold" font-size="6" fill="#fff">Забронировать услугу</text><rect x="43" y="118" width="61.8" height="9.6" rx="2" fill="#15304c" stroke="#1f3d5c" stroke-width=".5"/><rect x="47" y="122.3" width="12" height="1.1" fill="#d0d6de" opacity=".8"/><rect x="43" y="131" width="61.8" height="9.6" rx="2" fill="#15304c" stroke="#1f3d5c" stroke-width=".5"/><rect x="47" y="135.3" width="12" height="1.1" fill="#d0d6de" opacity=".8"/><rect x="43" y="143.7" width="61.8" height="9.6" rx="2" fill="#15304c" stroke="#1f3d5c" stroke-width=".5"/><rect x="47" y="148.0" width="12" height="1.1" fill="#d0d6de" opacity=".8"/><rect x="43" y="156.5" width="61.8" height="9.6" rx="2" fill="#15304c" stroke="#1f3d5c" stroke-width=".5"/><rect x="47" y="160.8" width="12" height="1.1" fill="#d0d6de" opacity=".8"/><rect x="43" y="169.4" width="61.8" height="9.6" rx="2" fill="#15304c" stroke="#1f3d5c" stroke-width=".5"/><rect x="47" y="173.70000000000002" width="12" height="1.1" fill="#d0d6de" opacity=".8"/><rect x="54.3" y="181.7" width="38.7" height="8.5" rx="4" fill="#2d9cf0"/><rect x="61" y="185.4" width="25" height="1" fill="#fff" opacity=".7"/><rect x="140" y="196.8" width="100" height=".7" fill="#c8ced8"/><rect x="148.6" y="102.6" width="47.6" height="94.6" rx="7" fill="#e4f0fc" stroke="#0f1f33" stroke-width="1.4"/><rect x="163" y="102.6" width="19" height="2.6" rx="1" fill="#0f1f33"/><rect x="155" y="114" width="35" height="23" fill="#f2f7fd"/><rect x="156.8" y="119.5" width="6.2" height="6.2" fill="#b6d0ea"/><rect x="156.8" y="128.0" width="6.2" height="6.2" fill="#b6d0ea"/><rect x="164.8" y="119.5" width="6.2" height="6.2" fill="#b6d0ea"/><rect x="164.8" y="128.0" width="6.2" height="6.2" fill="#b6d0ea"/><rect x="172.8" y="119.5" width="6.2" height="6.2" fill="#b6d0ea"/><rect x="172.8" y="128.0" width="6.2" height="6.2" fill="#b6d0ea"/><rect x="180.8" y="119.5" width="6.2" height="6.2" fill="#2d9cf0"/><rect x="180.8" y="128.0" width="6.2" height="6.2" fill="#b6d0ea"/><rect x="166.5" y="148" width="23" height="14" fill="#fff"/><rect x="168.5" y="150.5" width="19" height="2.5" fill="#b6d0ea"/><rect x="168.5" y="155.5" width="17" height=".8" fill="#b8bfca"/><rect x="168.5" y="158" width="17" height=".8" fill="#b8bfca"/><rect x="155.5" y="162.5" width="28" height="23.5" fill="#b6d0ea"/><rect x="158.5" y="166" width="6.5" height="6.5" fill="#fff"/><rect x="140.8" y="144.8" width="20.1" height="14.5" fill="#2d9cf0"/><circle cx="150.8" cy="150.5" r="2.6" fill="#fff"/><path d="M148.5 151.5 L150.8 155.5 L153.1 151.5 Z" fill="#fff"/><circle cx="150.8" cy="150.5" r="1" fill="#2d9cf0"/><rect x="188" y="167.8" width="15" height="12.8" fill="#f7dc3a"/><circle cx="195.5" cy="174.2" r="2.8" fill="none" stroke="#0f1f33" stroke-width="1.4"/><circle cx="136.8" cy="125.3" r="6" fill="#2b35b0"/><path d="M133.8 125.5 L136 127.6 L139.8 123.2" fill="none" stroke="#fff" stroke-width=".8"/><path d="M215 101 H231 Q233.5 101 233.5 104 V107 Q233.5 110 231 110 H220 L217 113 L217.5 110 Q215 110 215 107 Z" fill="#1a2fa0"/><path d="M219 104 L220.5 102.8 L222 104 L220.5 106.5 Z" fill="#fff"/><circle cx="213" cy="117" r="4.2" fill="#0f1f33"/><circle cx="211.5" cy="118.5" r="3.4" fill="#f2c4a0"/><path d="M203 131 Q206 123 214 125 Q221 127 222 139 L214 141 Z" fill="#3a9ded"/><path d="M207 139 L214 141 L222 139 L233 195 L229 196 L217 158 L221 195 L215 195 Z" fill="#0f1f33"/><path d="M204 129 L193 122" stroke="#f2c4a0" stroke-width="1.6"/><path d="M221 134 L236 158" stroke="#f2c4a0" stroke-width="1.6"/><path d="M214 195 L221 195 L221 198 L212 198 Z M229 195 L233 195 L240 197 L232 198 Z" fill="#0f1f33"/><rect x="0" y="219" width="260" height="16" fill="#e9f0f8"/><path d="M0 225 C12 220 22 220 40 231 C52 220 70 220 88 231 C100 220 118 220 136 231 C148 220 166 220 184 231 C196 220 214 220 232 231 C242 222 252 221 260 224" fill="none" stroke="#aac6e4" stroke-width="1.6" opacity=".85"/><path d="M0 228 C14 223 26 225 38 233 C50 224 72 224 86 233 C98 224 120 224 134 233 C146 224 168 224 182 233 C194 224 216 224 230 233 C240 225 252 224 260 227" fill="none" stroke="#c3d7ec" stroke-width="1.2" opacity=".9"/><path d="M0 235 V229 Q2 231 6 227 Q16 220 26 227 Q30 231 40 233 Q50.5 231 54.5 227 Q64.5 220 74.5 227 Q78.5 231 88.5 233 Q98.7 231 102.7 227 Q112.7 220 122.7 227 Q126.7 231 136.7 233 Q147 231 151 227 Q161 220 171 227 Q175 231 185 233 Q196.6 231 200.6 227 Q210.6 220 220.6 227 Q224.6 231 234.6 233 L260 229 V235 Z" fill="#ffffff" opacity=".92"/><rect x="0" y="235" width="260" height="65" fill="#ffffff"/><circle cx="40" cy="254" r="3.2" fill="#0f1f33"/><text x="45" y="256.5" font-family="Liberation Sans" font-size="7" fill="#0f1f33">Brighter</text><rect x="36" y="264.0" width="43.0" height="1.0" fill="#c4cad3"/><rect x="36" y="268.4" width="43.0" height="1.0" fill="#c4cad3"/><rect x="36" y="272.8" width="43.0" height="1.0" fill="#c4cad3"/><rect x="36" y="277.2" width="43.0" height="1.0" fill="#c4cad3"/><rect x="36" y="281.6" width="43.0" height="1.0" fill="#c4cad3"/><rect x="36" y="286.0" width="21.5" height="1.0" fill="#c4cad3"/><rect x="92" y="252.2" width="32" height="1.6" fill="#3b4250" opacity=".8"/><rect x="92" y="256" width="12" height=".7" fill="#8cc4f0" opacity=".8"/><rect x="132" y="252.2" width="24" height="1.6" fill="#3b4250" opacity=".8"/><rect x="132" y="256" width="12" height=".7" fill="#8cc4f0" opacity=".8"/><rect x="180.5" y="252.2" width="24" height="1.6" fill="#3b4250" opacity=".8"/><rect x="180.5" y="256" width="12" height=".7" fill="#8cc4f0" opacity=".8"/><rect x="92" y="266.0" width="22.0" height="1.0" fill="#c4cad3"/><rect x="92" y="270.8" width="22.0" height="1.0" fill="#c4cad3"/><rect x="92" y="275.6" width="22.0" height="1.0" fill="#c4cad3"/><rect x="92" y="280.4" width="22.0" height="1.0" fill="#c4cad3"/><rect x="92" y="285.2" width="17.6" height="1.0" fill="#c4cad3"/><rect x="132" y="266.0" width="22.0" height="1.0" fill="#c4cad3"/><rect x="132" y="270.8" width="22.0" height="1.0" fill="#c4cad3"/><rect x="132" y="275.6" width="22.0" height="1.0" fill="#c4cad3"/><rect x="132" y="280.4" width="22.0" height="1.0" fill="#c4cad3"/><rect x="132" y="285.2" width="22.0" height="1.0" fill="#c4cad3"/><rect x="181" y="263.8" width="43" height="8" rx="2" fill="#fff" stroke="#e3e7ee" stroke-width=".6"/><rect x="185" y="267.2" width="12" height="1" fill="#b4bac4"/><rect x="181" y="275.7" width="43" height="8" rx="2.2" fill="#0f1f33"/><rect x="193" y="279" width="19" height="1.2" fill="#fff" opacity=".75"/><rect x="181.0" y="288.5" width="3.6" height="3.6" rx=".6" fill="#3b5998" opacity=".8"/><rect x="188.3" y="288.5" width="3.6" height="3.6" rx=".6" fill="#1da1f2" opacity=".8"/><rect x="195.6" y="288.5" width="3.6" height="3.6" rx=".6" fill="#e1306c" opacity=".8"/><rect x="202.9" y="288.5" width="3.6" height="3.6" rx=".6" fill="#0e76a8" opacity=".8"/><circle cx="41" cy="299.7" r="4.8" fill="#2d9cf0"/><path d="M39 300.2 L40.6 301.6 L43.3 298.4" fill="none" stroke="#fff" stroke-width=".9"/><rect x="47.7" y="297.5" width="17" height="1" fill="#b4bac4"/><rect x="47.7" y="301.3" width="25" height="1.8" fill="#2c3340"/><circle cx="245" cy="251" r="4.2" fill="none" stroke="#d6dde7" stroke-width="1"/><circle cx="12" cy="288" r="6" fill="none" stroke="#dcdcf0" stroke-width="1.2"/></g></svg></div>
<div class="t" style="left:1556px;width:302px;text-align:center;top:756.3px;font-size:15px;font-weight:bold;color:#333;letter-spacing:0px">БРОНИРОВАНИЕ</div>
<div class="abs" style="left:1684px;top:821px;width:46px;height:24px;border-radius:12px;background:#3f6fa2;box-shadow:0 2px 4px rgba(0,0,0,.12)"></div>
<div class="abs" style="left:1706.2px;top:821.1px;width:23.8px;height:23.8px;border-radius:50%;background:#fff;border:1px solid #3f6fa2"></div>
<div class="abs" style="left:590px;top:869px;width:302px;height:387px;background:#f8fafc;border:1px solid #e3e6eb;border-radius:12px"></div>
<div class="abs" style="left:611px;top:890px;width:260px;height:300px;transform:scale(1.0);transform-origin:0 0"><svg width="260" height="300" viewBox="0 0 260 300"><defs><clipPath id="tce"><path d="M0 11 Q0 0 11 0 H249 Q260 0 260 11 V289 Q260 300 249 300 H11 Q0 300 0 289 Z"/></clipPath></defs><g clip-path="url(#tce)"><rect width="260" height="300" fill="#f4f7fb"/><defs><linearGradient id="hge" x1="0" y1="0" x2="1" y2="0"><stop offset="0" stop-color="#0d3798"/><stop offset=".3" stop-color="#0d379b"/><stop offset=".45" stop-color="#1445a5"/><stop offset=".62" stop-color="#0b3192"/><stop offset="1" stop-color="#08268a"/></linearGradient><linearGradient id="sne" x1="0" y1="0" x2="0" y2="1"><stop offset="0" stop-color="#ffffff"/><stop offset=".45" stop-color="#fbfcfd"/><stop offset=".75" stop-color="#f0f3f7"/><stop offset="1" stop-color="#f4f7fb"/></linearGradient></defs><path d="M0 11 Q0 0 11 0 H249 Q260 0 260 11 V78 H0 Z" fill="url(#hge)"/><circle cx="9" cy="8.7" r="3.4" fill="#fff"/><circle cx="9" cy="8.7" r="1.6" fill="#0b2f8e"/><text x="14.5" y="11.3" font-family="Liberation Sans" font-size="7.4" fill="#fff" textLength="21.5" lengthAdjust="spacingAndGlyphs">Brighter</text><rect x="101.8" y="8" width="11.600000000000009" height="1.3" fill="#4aa8f5" opacity=".6"/><rect x="119" y="8" width="16.80000000000001" height="1.3" fill="#dfe6f5" opacity=".6"/><rect x="142.3" y="8" width="8.699999999999989" height="1.3" fill="#dfe6f5" opacity=".6"/><rect x="157.5" y="8" width="6.5" height="1.3" fill="#dfe6f5" opacity=".6"/><rect x="170.5" y="8" width="13.699999999999989" height="1.3" fill="#dfe6f5" opacity=".6"/><circle cx="191.3" cy="8.3" r="1.6" fill="none" stroke="#fff" stroke-width=".6"/><rect x="198" y="4.4" width="8.6" height="8.6" rx="2" fill="#f7dc3a"/><path d="M200.5 10.5 L204 7" stroke="#0f1f33" stroke-width=".9"/><rect x="208.8" y="7.8" width="25" height="1.7" fill="#fff" opacity=".9"/><rect x="238.4" y="4.4" width="16.6" height="8.6" rx="2.2" fill="#2d9cf0"/><rect x="243.5" y="8" width="6.5" height="1.4" fill="#fff" opacity=".8"/><circle cx="13" cy="23.9" r="7.6" fill="none" stroke="#b9cdf0" stroke-width="1.1" opacity=".9"/><circle cx="234" cy="51.4" r="4.8" fill="none" stroke="#b9cdf0" stroke-width="1" opacity=".9"/><text x="130" y="34.3" text-anchor="middle" font-family="Liberation Sans" font-weight="bold" font-size="12.5" fill="#fff">Наши услуги</text><rect x="108.0" y="41.2" width="44" height="8.7" rx="2.2" fill="#f7dc3a"/><rect x="113.0" y="44.8" width="34" height="1.5" fill="#5a5320" opacity=".55"/><path d="M0 64.6 C3.6 64.0 11.6 61.0 16.4 61.2 C21.2 61.4 24.6 66.4 28.7 66 C32.8 65.6 36.5 61.2 41 59 C45.5 56.8 51.0 53.2 56 53 C61.0 52.8 66.2 56.2 71 57.8 C75.8 59.4 80.6 61.2 84.7 62.5 C88.8 63.8 91.0 65.2 95.6 65.3 C100.1 65.4 107.9 62.5 112 63.2 C116.1 63.9 114.5 68.4 120 69.4 C125.5 70.4 139.3 70.3 144.8 69.4 C150.3 68.5 149.8 64.8 153 64 C156.2 63.2 159.9 65.2 164 64.6 C168.1 64.0 172.6 61.9 177.6 60.5 C182.6 59.1 188.8 57.6 194 56.4 C199.2 55.1 204.0 52.7 209 53 C214.0 53.3 219.7 56.4 224 58.4 C228.3 60.4 231.2 64.8 235 65.3 C238.8 65.8 242.8 61.3 247 61.2 C251.2 61.1 257.0 64.0 260 64.6 V82 H0 Z" fill="url(#sne)"/><ellipse cx="57" cy="69.5" rx="12" ry="1.6" fill="#c3c8d0" opacity=".5"/><ellipse cx="95" cy="71" rx="9" ry="1.4" fill="#c3c8d0" opacity=".4"/><ellipse cx="170" cy="71" rx="10" ry="1.4" fill="#c3c8d0" opacity=".4"/><ellipse cx="210" cy="69.5" rx="12" ry="1.6" fill="#c3c8d0" opacity=".5"/><rect x="35.9" y="96.4" width="59.3" height="59.8" rx="2.5" fill="#fff" stroke="#eef1f5" stroke-width=".6"/><path d="M57.9 101.4 L83.9 126.4" stroke="#eef2f7" stroke-width="6" opacity=".8"/><rect x="47.9" y="108.9" width="9" height="9.5" fill="none" stroke="#6b7a90" stroke-width=".9"/><rect x="50.9" y="112.4" width="3" height="3.5" fill="#8cc4f0"/><text x="42.4" y="132.4" font-family="Liberation Sans" font-weight="bold" font-size="5" fill="#2c3340">Уборка полов</text><rect x="42.4" y="135.9" width="44.0" height="0.7" fill="#b8bfca"/><rect x="42.4" y="139.9" width="44.0" height="0.7" fill="#b8bfca"/><rect x="42.4" y="143.9" width="8.8" height="0.7" fill="#b8bfca"/><rect x="100.5" y="96.4" width="59.3" height="59.8" rx="2.5" fill="#fff" stroke="#eef1f5" stroke-width=".6"/><path d="M122.5 101.4 L148.5 126.4" stroke="#eef2f7" stroke-width="6" opacity=".8"/><rect x="112.5" y="108.9" width="9" height="9.5" fill="none" stroke="#6b7a90" stroke-width=".9"/><rect x="115.5" y="112.4" width="3" height="3.5" fill="#8cc4f0"/><text x="107.0" y="130.9" font-family="Liberation Sans" font-weight="bold" font-size="5" fill="#2c3340">Очистка водостоков</text><rect x="107.0" y="134.4" width="44.0" height="0.7" fill="#b8bfca"/><rect x="107.0" y="138.4" width="44.0" height="0.7" fill="#b8bfca"/><rect x="107.0" y="142.4" width="8.8" height="0.7" fill="#b8bfca"/><rect x="164.9" y="96.4" width="59.3" height="59.8" rx="2.5" fill="#fff" stroke="#eef1f5" stroke-width=".6"/><path d="M186.9 101.4 L212.9 126.4" stroke="#eef2f7" stroke-width="6" opacity=".8"/><rect x="176.9" y="108.9" width="9" height="9.5" fill="none" stroke="#6b7a90" stroke-width=".9"/><rect x="179.9" y="112.4" width="3" height="3.5" fill="#8cc4f0"/><text x="171.4" y="130.9" font-family="Liberation Sans" font-weight="bold" font-size="5" fill="#2c3340">Уборка кухни</text><rect x="171.4" y="134.4" width="44.0" height="0.7" fill="#b8bfca"/><rect x="171.4" y="138.4" width="44.0" height="0.7" fill="#b8bfca"/><rect x="171.4" y="142.4" width="8.8" height="0.7" fill="#b8bfca"/><rect x="35.9" y="162.6" width="59.3" height="59.8" rx="2.5" fill="#fff" stroke="#eef1f5" stroke-width=".6"/><path d="M57.9 167.6 L83.9 192.6" stroke="#eef2f7" stroke-width="6" opacity=".8"/><rect x="47.9" y="175.1" width="9" height="9.5" fill="none" stroke="#6b7a90" stroke-width=".9"/><rect x="50.9" y="178.6" width="3" height="3.5" fill="#8cc4f0"/><text x="42.4" y="197.1" font-family="Liberation Sans" font-weight="bold" font-size="5" fill="#2c3340">Уборка туалета</text><rect x="42.4" y="200.6" width="44.0" height="0.7" fill="#b8bfca"/><rect x="42.4" y="204.6" width="44.0" height="0.7" fill="#b8bfca"/><rect x="42.4" y="208.6" width="8.8" height="0.7" fill="#b8bfca"/><rect x="100.5" y="162.6" width="59.3" height="59.8" rx="2.5" fill="#fff" stroke="#eef1f5" stroke-width=".6"/><path d="M122.5 167.6 L148.5 192.6" stroke="#eef2f7" stroke-width="6" opacity=".8"/><rect x="112.5" y="175.1" width="9" height="9.5" fill="none" stroke="#6b7a90" stroke-width=".9"/><rect x="115.5" y="178.6" width="3" height="3.5" fill="#8cc4f0"/><text x="107.0" y="197.1" font-family="Liberation Sans" font-weight="bold" font-size="5" fill="#2c3340">Уборка комнат</text><rect x="107.0" y="200.6" width="44.0" height="0.7" fill="#b8bfca"/><rect x="107.0" y="204.6" width="44.0" height="0.7" fill="#b8bfca"/><rect x="107.0" y="208.6" width="8.8" height="0.7" fill="#b8bfca"/><rect x="164.9" y="162.6" width="59.3" height="59.8" rx="2.5" fill="#fff" stroke="#eef1f5" stroke-width=".6"/><path d="M186.9 167.6 L212.9 192.6" stroke="#eef2f7" stroke-width="6" opacity=".8"/><rect x="176.9" y="175.1" width="9" height="9.5" fill="none" stroke="#6b7a90" stroke-width=".9"/><rect x="179.9" y="178.6" width="3" height="3.5" fill="#8cc4f0"/><text x="171.4" y="197.1" font-family="Liberation Sans" font-weight="bold" font-size="5" fill="#2c3340">Уборка офисов</text><rect x="171.4" y="200.6" width="44.0" height="0.7" fill="#b8bfca"/><rect x="171.4" y="204.6" width="44.0" height="0.7" fill="#b8bfca"/><rect x="171.4" y="208.6" width="8.8" height="0.7" fill="#b8bfca"/><path d="M0 238 H260 V289 Q260 300.8 249 300.8 H11 Q0 300.8 0 289 Z" fill="#e2effc"/><rect x="36.3" y="254.3" width="59.3" height="43.3" rx="4" fill="#fff" stroke="#cfe0f2" stroke-width=".6"/><text x="43.3" y="272.5" font-family="Liberation Sans" font-weight="bold" font-size="10.5" fill="#3b8fd0">800</text><rect x="43.3" y="276.5" width="25" height=".9" fill="#6a7280"/><rect x="43.3" y="281.0" width="42.0" height="0.7" fill="#b8bfca"/><rect x="43.3" y="284.5" width="29.4" height="0.7" fill="#b8bfca"/><rect x="100.8" y="254.3" width="59.3" height="43.3" rx="4" fill="#fff" stroke="#cfe0f2" stroke-width=".6"/><text x="107.8" y="272.5" font-family="Liberation Sans" font-weight="bold" font-size="10.5" fill="#3b8fd0">15</text><rect x="107.8" y="276.5" width="25" height=".9" fill="#6a7280"/><rect x="107.8" y="281.0" width="42.0" height="0.7" fill="#b8bfca"/><rect x="107.8" y="284.5" width="29.4" height="0.7" fill="#b8bfca"/><rect x="164.6" y="254.3" width="59.3" height="43.3" rx="4" fill="#fff" stroke="#cfe0f2" stroke-width=".6"/><text x="171.6" y="272.5" font-family="Liberation Sans" font-weight="bold" font-size="10.5" fill="#3b8fd0">352</text><rect x="171.6" y="276.5" width="25" height=".9" fill="#6a7280"/><rect x="171.6" y="281.0" width="42.0" height="0.7" fill="#b8bfca"/><rect x="171.6" y="284.5" width="29.4" height="0.7" fill="#b8bfca"/></g></svg></div>
<div class="t" style="left:590px;width:302px;text-align:center;top:1216.3px;font-size:15px;font-weight:bold;color:#333;letter-spacing:0px">УСЛУГИ</div>
<div class="abs" style="left:718px;top:1281px;width:46px;height:24px;border-radius:12px;background:#3f6fa2;box-shadow:0 2px 4px rgba(0,0,0,.12)"></div>
<div class="abs" style="left:740.2px;top:1281.1px;width:23.8px;height:23.8px;border-radius:50%;background:#fff;border:1px solid #3f6fa2"></div>
</body></html>
